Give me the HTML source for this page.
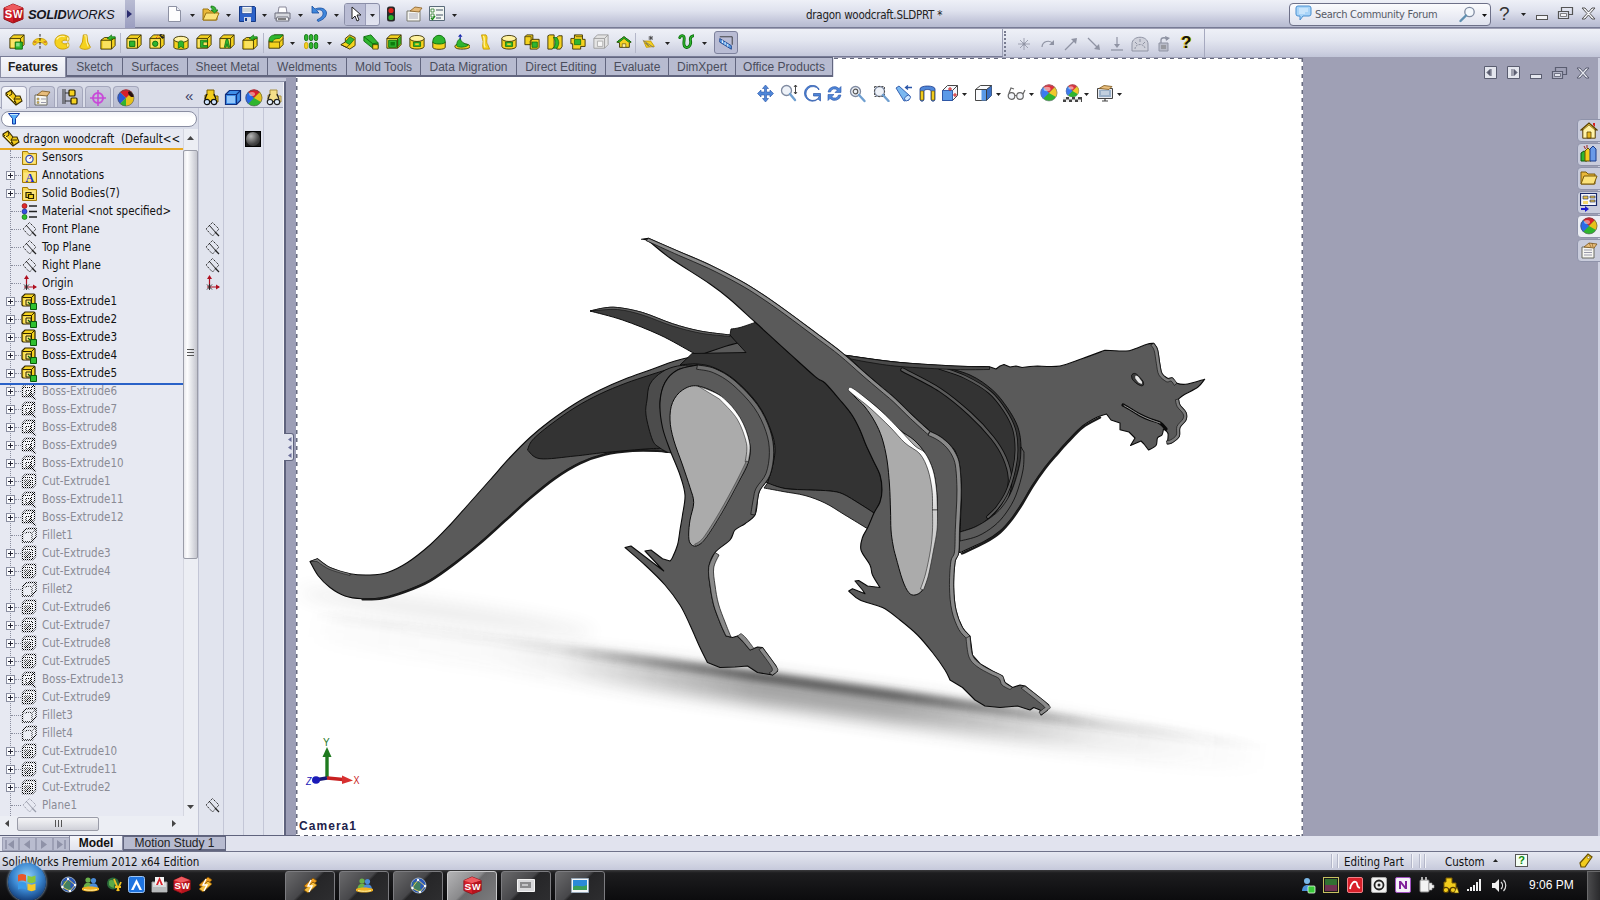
<!DOCTYPE html>
<html><head><meta charset="utf-8"><title>dragon woodcraft.SLDPRT</title>
<style>
*{box-sizing:border-box;margin:0;padding:0}
html,body{width:1600px;height:900px;overflow:hidden;background:#9fa0b5}
body{font-family:"DejaVu Sans Condensed","Liberation Sans",sans-serif;font-size:11px;color:#111}
#app{position:relative;width:1600px;height:900px;overflow:hidden;background:#9fa0b5}
.abs{position:absolute}
#titlebar{position:absolute;left:0;top:0;width:1600px;height:28px;background:linear-gradient(#eef0f7 0%,#dfe2ee 40%,#c6c9dc 75%,#b6bad0 100%);border-bottom:1px solid #777b95}
#logo{position:absolute;left:0;top:0;width:125px;height:28px;background:linear-gradient(#e8eaf3,#d6d9e7 50%,#c3c6d9)}
#logoarrow{position:absolute;left:125px;top:0;width:10px;height:28px;background:linear-gradient(#b9bcd3,#9b9ec0)}
#toolbar{position:absolute;left:0;top:29px;width:1600px;height:28px;background:linear-gradient(#eef0f7 0%,#e3e6f0 40%,#cfd2e2 80%,#c2c6d9 100%)}
#tabrow{position:absolute;left:0;top:57px;width:834px;height:20px;background:#dfe1ec}
.tab{position:absolute;top:57px;height:20px;border:1px solid #62667f;border-width:1px 1px 2px 1px;background:#b7bbd0;font-family:"Liberation Sans",sans-serif;font-size:12px;color:#4a4d5c;text-align:center;line-height:19px;white-space:nowrap}
.tab.act{background:linear-gradient(#f6f7fb,#e4e6f0);color:#222;font-weight:bold;border-color:#8a8da4;border-width:0 1px 1px 1px;height:21px;line-height:21px}
#viewport{position:absolute;left:296px;top:58px;width:1007px;height:778px;background:#fff;overflow:hidden}
.tt{font-family:"DejaVu Sans Condensed","Liberation Sans",sans-serif;font-size:11.5px;line-height:16px;white-space:nowrap;color:#111}
.pm{width:9px;height:9px;border:1px solid #8a8ea0;background:#fafbfd}
.pm:before{content:"";position:absolute;left:1px;top:3px;width:5px;height:1px;background:#223}
.pm:after{content:"";position:absolute;left:3px;top:1px;width:1px;height:5px;background:#223}

</style></head><body>
<div id="app">
<div id="viewport"><svg class="abs" style="left:-296px;top:-58px" width="1600" height="900" viewBox="0 0 1600 900"><defs><filter id="bl" x="-10%" y="-300%" width="120%" height="700%"><feGaussianBlur stdDeviation="3"/></filter><filter id="bl2" x="-10%" y="-300%" width="120%" height="700%"><feGaussianBlur stdDeviation="8.500"/></filter><linearGradient id="sg" x1="0" x2="1" y1="0" y2="0"><stop offset="0" stop-color="#404040" stop-opacity="0"/><stop offset=".04" stop-color="#404040" stop-opacity=".03"/><stop offset=".2" stop-color="#404040" stop-opacity=".06"/><stop offset=".265" stop-color="#404040" stop-opacity=".13"/><stop offset=".37" stop-color="#404040" stop-opacity=".52"/><stop offset=".47" stop-color="#404040" stop-opacity=".82"/><stop offset=".61" stop-color="#404040" stop-opacity=".78"/><stop offset=".71" stop-color="#404040" stop-opacity=".5"/><stop offset=".82" stop-color="#404040" stop-opacity=".16"/><stop offset=".92" stop-color="#404040" stop-opacity=".05"/><stop offset="1" stop-color="#404040" stop-opacity="0"/></linearGradient></defs>
<g transform="rotate(7.900 787 679)"><rect x="300" y="678.500" width="980" height="30" fill="url(#sg)" filter="url(#bl2)" opacity=".6"/><rect x="300" y="675" width="980" height="11" fill="url(#sg)" filter="url(#bl)" opacity=".9"/><ellipse cx="440" cy="660" rx="150" ry="9" fill="#404040" opacity=".1" filter="url(#bl2)"/></g>
<path d="M590.0 311.0C592.3 310.5 599.4 308.6 604.0 308.0C608.6 307.4 611.1 306.8 617.5 307.5C623.9 308.2 633.3 309.8 642.5 312.5C651.7 315.2 662.9 320.6 672.5 323.7C682.1 326.8 690.4 329.1 700.0 331.0C709.6 332.9 725.0 334.3 730.0 335.0L730.0 335.0L746.0 352.5L746.0 352.5L720.0 360.0L700.0 356.0C698.8 355.4 699.2 356.0 692.5 352.5C685.8 349.0 671.7 340.4 660.0 335.0C648.3 329.6 634.2 324.0 622.5 320.0C610.8 316.0 595.4 312.5 590.0 311.0Z" fill="#3c3c3c" stroke="#0a0a0a" stroke-width="1" stroke-linejoin="round" />
<path d="M590.0 311.0C592.3 310.5 599.4 308.6 604.0 308.0C608.6 307.4 611.1 306.8 617.5 307.5C623.9 308.2 633.3 309.8 642.5 312.5C651.7 315.2 662.9 320.6 672.5 323.7C682.1 326.8 690.4 329.1 700.0 331.0C709.6 332.9 725.0 334.3 730.0 335.0L730.0 336.5C725.0 335.9 709.6 334.8 700.0 333.0C690.4 331.2 682.1 329.0 672.5 326.0C662.9 323.0 651.7 317.8 642.5 315.0C633.3 312.2 626.2 310.2 617.5 309.5C608.8 308.8 594.6 310.8 590.0 311.0Z" fill="#666" stroke="#0a0a0a" stroke-width="0.6" stroke-linejoin="round" />
<path d="M310.0 561.5L317.5 558.7C319.6 560.2 324.6 565.0 330.0 567.5C335.4 570.0 343.3 572.5 350.0 573.7C356.7 575.0 363.8 575.2 370.0 575.0C376.2 574.8 381.2 574.6 387.5 572.5C393.8 570.4 400.4 567.1 407.5 562.5C414.6 557.9 422.9 551.2 430.0 545.0C437.1 538.8 443.3 532.1 450.0 525.0C456.7 517.9 463.3 510.0 470.0 502.5C476.7 495.0 483.3 487.5 490.0 480.0C496.7 472.5 503.3 464.6 510.0 457.5C516.7 450.4 523.3 443.6 530.0 437.5C536.7 431.4 542.5 426.6 550.0 421.0C557.5 415.4 566.7 408.9 575.0 403.7C583.3 398.5 591.7 394.1 600.0 390.0C608.3 385.9 616.7 382.3 625.0 379.0C633.3 375.7 641.7 373.0 650.0 370.0C658.3 367.0 666.7 363.5 675.0 361.0C683.3 358.5 695.8 356.0 700.0 355.0L700.0 355.0C710.0 352.5 735.5 339.9 760.0 340.0C784.5 340.1 824.5 351.8 847.0 355.5C869.5 359.2 877.0 360.2 895.0 362.0C913.0 363.8 939.2 365.2 955.0 366.0C970.8 366.8 983.8 366.6 989.5 366.7L996.0 369.0L1000.0 366.0L1004.0 364.5L1010.0 367.0L1016.0 366.0L1022.0 367.5L1030.0 366.5L1037.5 366.0C1041.2 366.0 1052.5 367.2 1060.0 366.0C1067.5 364.8 1075.0 361.1 1082.5 358.5C1090.0 355.9 1101.2 351.6 1105.0 350.2L1105.0 350.2C1108.5 350.3 1121.0 351.2 1126.0 351.0C1131.0 350.8 1131.5 349.8 1135.0 348.7C1138.5 347.6 1143.9 345.1 1147.0 344.2C1150.1 343.3 1152.6 343.4 1153.7 343.2L1153.7 343.2C1154.3 344.2 1156.5 346.2 1157.5 349.5C1158.5 352.8 1159.0 359.0 1159.7 363.0C1160.5 367.0 1160.6 370.9 1162.0 373.5C1163.4 376.1 1167.0 377.8 1168.0 378.7L1168.0 378.7C1168.8 378.6 1171.0 377.2 1172.5 378.0C1174.0 378.8 1174.5 382.2 1177.0 383.2C1179.5 384.2 1182.9 384.7 1187.5 384.0C1192.1 383.3 1201.8 380.0 1204.7 379.2L1204.7 379.2C1203.6 380.5 1201.4 384.4 1198.0 387.0C1194.6 389.6 1187.8 392.5 1184.5 394.5C1181.2 396.5 1179.5 398.2 1178.5 399.0L1178.5 399.0C1178.8 400.0 1178.8 402.8 1180.0 405.0C1181.2 407.2 1185.0 410.0 1186.0 412.5C1187.0 415.0 1187.0 417.5 1186.0 420.0C1185.0 422.5 1181.1 424.8 1180.0 427.5C1178.9 430.2 1180.5 434.0 1179.2 436.5C1178.0 439.0 1174.5 441.2 1172.5 442.5C1170.5 443.8 1168.1 443.8 1167.2 444.0L1167.2 444.0C1167.3 442.2 1168.6 436.0 1168.0 433.5C1167.4 431.0 1164.2 429.8 1163.5 429.0L1163.5 429.0C1163.2 430.0 1163.0 433.5 1162.0 435.0C1161.0 436.5 1158.5 436.2 1157.5 438.0C1156.5 439.8 1157.5 443.5 1156.0 445.5C1154.5 447.5 1149.8 449.2 1148.5 450.0L1144.0 444.0L1141.0 441.0L1130.5 445.5L1135.0 438.0L1129.0 432.0L1120.0 429.7L1120.0 423.0L1111.0 420.0L1106.5 414.0L1106.5 414.0C1105.0 414.5 1101.5 415.0 1097.5 417.0C1093.5 419.0 1087.5 422.0 1082.5 426.0C1077.5 430.0 1072.1 436.2 1067.5 441.0C1062.9 445.8 1058.8 450.7 1055.0 455.0C1051.2 459.3 1048.8 462.0 1045.0 467.0C1041.2 472.0 1036.2 479.2 1032.5 485.0C1028.8 490.8 1025.8 496.7 1022.5 502.0C1019.2 507.3 1016.2 512.2 1012.5 517.0C1008.8 521.8 1004.6 527.0 1000.0 531.0C995.4 535.0 991.7 537.4 985.0 541.0C978.3 544.6 964.2 550.6 960.0 552.5L960.0 552.5C955.0 550.4 940.0 544.6 930.0 540.0C920.0 535.4 909.6 529.5 900.0 525.0C890.4 520.5 880.8 516.7 872.5 513.0C864.2 509.3 857.9 505.8 850.0 503.0C842.1 500.2 833.3 498.0 825.0 496.0C816.7 494.0 806.7 492.2 800.0 491.0C793.3 489.8 790.4 490.1 785.0 488.7C779.6 487.3 770.4 483.5 767.5 482.5L767.5 482.5C759.6 480.4 732.9 473.8 720.0 470.0C707.1 466.2 698.8 463.2 690.0 460.0C681.2 456.8 671.2 452.5 667.5 451.0L667.5 451.0C665.8 450.8 663.3 450.2 657.5 450.0C651.7 449.8 641.2 449.4 632.5 450.0C623.8 450.6 613.8 451.6 605.0 453.7C596.2 455.8 588.3 458.5 580.0 462.5C571.7 466.5 563.3 471.7 555.0 477.5C546.7 483.3 538.3 490.4 530.0 497.5C521.7 504.6 513.3 512.5 505.0 520.0C496.7 527.5 488.3 535.4 480.0 542.5C471.7 549.6 463.3 556.2 455.0 562.5C446.7 568.8 438.3 575.2 430.0 580.0C421.7 584.8 412.9 588.1 405.0 591.0C397.1 593.9 389.6 596.2 382.5 597.5C375.4 598.8 368.8 599.0 362.5 598.7C356.2 598.5 350.4 597.9 345.0 596.0C339.6 594.1 334.5 590.9 330.0 587.5C325.5 584.1 321.3 579.8 318.0 575.5C314.7 571.2 311.3 563.8 310.0 561.5Z" fill="#5a5a5a" stroke="#0a0a0a" stroke-width="1.1" stroke-linejoin="round" />
<path d="M667.5 452.0C665.8 451.8 663.3 451.2 657.5 451.0C651.7 450.8 641.2 450.4 632.5 451.0C623.8 451.6 613.8 452.6 605.0 454.7C596.2 456.8 588.3 459.5 580.0 463.5C571.7 467.5 563.3 472.7 555.0 478.5C546.7 484.3 538.3 491.4 530.0 498.5C521.7 505.6 513.3 513.5 505.0 521.0C496.7 528.5 488.3 536.4 480.0 543.5C471.7 550.6 463.3 557.2 455.0 563.5C446.7 569.8 438.3 576.2 430.0 581.0C421.7 585.8 412.9 589.1 405.0 592.0C397.1 594.9 389.6 597.2 382.5 598.5C375.4 599.8 365.8 599.3 362.5 599.5" fill="none" stroke="#1a1a1a" stroke-width="2.2" stroke-linecap="round" stroke-linejoin="round" />
<path d="M1100.0 417.5C1097.1 419.2 1087.9 423.3 1082.5 427.5C1077.1 431.7 1072.1 437.7 1067.5 442.5C1062.9 447.3 1058.8 452.2 1055.0 456.5C1051.2 460.8 1048.8 463.5 1045.0 468.5C1041.2 473.5 1036.2 480.7 1032.5 486.5C1028.8 492.3 1025.8 498.2 1022.5 503.5C1019.2 508.8 1016.2 513.7 1012.5 518.5C1008.8 523.3 1004.6 528.5 1000.0 532.5C995.4 536.5 991.3 539.0 985.0 542.5C978.7 546.0 965.8 551.7 962.0 553.5" fill="none" stroke="#1a1a1a" stroke-width="2.4" stroke-linecap="round" stroke-linejoin="round" />
<path d="M527.5 450.0C528.3 448.3 528.8 444.2 532.5 440.0C536.2 435.8 542.9 430.4 550.0 425.0C557.1 419.6 566.7 412.7 575.0 407.5C583.3 402.3 591.7 398.0 600.0 394.0C608.3 390.0 616.7 386.7 625.0 383.5C633.3 380.3 642.2 377.6 650.0 375.0C657.8 372.4 668.3 369.2 672.0 368.0L672.0 368.0C670.0 373.3 661.7 389.7 660.0 400.0C658.3 410.3 660.7 421.9 662.0 430.0C663.3 438.1 667.0 445.6 668.0 448.7L668.0 448.7C665.0 448.7 660.5 448.1 650.0 448.7C639.5 449.3 617.5 451.3 605.0 452.5C592.5 453.7 585.8 455.0 575.0 456.0C564.2 457.0 547.9 459.7 540.0 458.7C532.1 457.7 529.6 451.4 527.5 450.0Z" fill="#333" stroke="#0a0a0a" stroke-width="0.9" stroke-linejoin="round" />
<path d="M692.0 353.5L746.0 352.5L746.0 352.5L730.0 335.0L730.0 335.0L731.0 329.0L731.0 329.0C732.5 328.8 736.0 328.6 740.0 327.5C744.0 326.4 752.5 323.3 755.0 322.5L755.0 322.0C760.3 326.8 776.5 341.8 786.6 350.9C796.7 360.0 809.1 371.5 815.5 376.9C821.9 382.2 820.9 379.1 825.0 383.0C829.1 386.9 835.5 394.7 840.0 400.0C844.5 405.3 848.7 410.0 852.0 415.0C855.3 420.0 857.7 425.0 860.0 430.0C862.3 435.0 863.8 440.0 866.0 445.0C868.2 450.0 870.7 455.0 873.0 460.0C875.3 465.0 878.5 470.0 880.0 475.0C881.5 480.0 882.0 485.5 882.0 490.0C882.0 494.5 881.3 498.2 880.0 502.0C878.7 505.8 875.0 511.2 874.0 513.0L874.0 513.0C871.7 511.5 865.2 507.2 860.0 504.0C854.8 500.8 848.0 496.2 843.0 494.0C838.0 491.8 835.5 491.7 830.0 491.0C824.5 490.3 817.5 490.4 810.0 490.0C802.5 489.6 792.1 489.6 785.0 488.5C777.9 487.4 770.4 484.3 767.5 483.5L767.5 483.5C768.8 478.2 774.6 461.2 775.0 452.0C775.4 442.8 773.0 436.2 770.0 428.0C767.0 419.8 762.8 411.0 757.0 403.0C751.2 395.0 742.0 385.8 735.0 380.0C728.0 374.2 721.2 370.7 715.0 368.0C708.8 365.3 703.3 364.5 697.5 364.0C691.7 363.5 682.9 364.8 680.0 365.0L680.0 365.0L692.0 353.5Z" fill="#333" stroke="#0a0a0a" stroke-width="0.9" stroke-linejoin="round" />
<path d="M767.5 483.0C770.4 483.9 777.9 487.3 785.0 488.5C792.1 489.7 802.5 489.6 810.0 490.0C817.5 490.4 824.5 490.3 830.0 491.0C835.5 491.7 838.0 491.8 843.0 494.0C848.0 496.2 854.8 500.8 860.0 504.0C865.2 507.2 871.7 511.5 874.0 513.0L874.0 513.0L868.0 529.0L868.0 529.0C864.2 526.7 852.2 519.3 845.0 515.0C837.8 510.7 831.7 506.2 825.0 503.0C818.3 499.8 812.0 497.4 805.0 495.5C798.0 493.6 789.8 492.8 783.0 491.5C776.2 490.2 767.2 488.6 764.0 488.0Z" fill="#5a5a5a" stroke="#0a0a0a" stroke-width="0.9" stroke-linejoin="round" />
<path d="M847.0 355.5C855.0 356.6 879.5 360.2 895.0 362.0C910.5 363.8 932.5 365.3 940.0 366.0L940.0 366.0C945.0 367.5 961.2 371.0 970.0 375.0C978.8 379.0 986.2 384.5 992.5 390.0C998.8 395.5 1003.2 401.8 1007.5 408.0C1011.8 414.2 1015.8 421.0 1018.0 427.5C1020.2 434.0 1020.8 440.8 1021.0 447.0C1021.2 453.2 1021.0 457.8 1019.5 465.0C1018.0 472.2 1014.9 483.0 1012.0 490.0C1009.1 497.0 1005.7 502.3 1002.0 507.0C998.3 511.7 994.5 514.7 990.0 518.0C985.5 521.3 980.0 524.7 975.0 527.0C970.0 529.3 962.5 531.2 960.0 532.0L960.0 532.0C960.2 527.0 961.0 510.7 961.0 502.0C961.0 493.3 960.7 487.7 960.0 480.0C959.3 472.3 958.7 461.8 957.0 456.0C955.3 450.2 954.5 449.1 950.0 445.0C945.5 440.9 933.3 433.8 930.0 431.5L930.0 431.5C927.2 428.9 918.7 421.4 913.0 416.0C907.3 410.6 900.7 403.7 895.6 399.0C890.5 394.3 887.4 392.0 882.2 387.6C877.0 383.2 870.3 377.8 864.4 372.4C858.5 367.0 849.9 358.3 847.0 355.5Z" fill="#333" stroke="#0a0a0a" stroke-width="0.9" stroke-linejoin="round" />
<path d="M902.5 369.7C908.8 373.1 928.8 382.6 940.0 390.0C951.2 397.4 961.2 406.0 970.0 414.0C978.8 422.0 986.8 430.8 992.5 438.0C998.2 445.2 1001.6 450.8 1004.5 457.5C1007.4 464.2 1009.6 471.4 1010.0 478.0C1010.4 484.6 1009.0 491.3 1007.0 497.0C1005.0 502.7 1001.5 507.7 998.0 512.0C994.5 516.3 988.0 521.2 986.0 523.0" fill="none" stroke="#0a0a0a" stroke-width="4.4" stroke-linecap="round" stroke-linejoin="round" />
<path d="M902.5 369.7C908.8 373.1 928.8 382.6 940.0 390.0C951.2 397.4 961.2 406.0 970.0 414.0C978.8 422.0 986.8 430.8 992.5 438.0C998.2 445.2 1001.6 450.8 1004.5 457.5C1007.4 464.2 1009.6 471.4 1010.0 478.0C1010.4 484.6 1009.0 491.3 1007.0 497.0C1005.0 502.7 1001.5 507.7 998.0 512.0C994.5 516.3 988.0 521.2 986.0 523.0" fill="none" stroke="#5a5a5a" stroke-width="2.6" stroke-linecap="round" stroke-linejoin="round" />
<path d="M940.0 368.0C944.2 369.5 956.8 373.0 965.0 377.0C973.2 381.0 982.9 386.5 989.5 392.0C996.1 397.5 1000.4 403.8 1004.5 410.0C1008.6 416.2 1012.0 422.3 1014.0 429.0C1016.0 435.7 1016.5 443.2 1016.5 450.0C1016.5 456.8 1015.6 463.0 1014.0 470.0C1012.4 477.0 1009.8 485.7 1007.0 492.0C1004.2 498.3 1000.2 503.8 997.0 508.0C993.8 512.2 989.5 515.5 988.0 517.0" fill="none" stroke="#0a0a0a" stroke-width="3.6" stroke-linecap="round" stroke-linejoin="round" />
<path d="M940.0 368.0C944.2 369.5 956.8 373.0 965.0 377.0C973.2 381.0 982.9 386.5 989.5 392.0C996.1 397.5 1000.4 403.8 1004.5 410.0C1008.6 416.2 1012.0 422.3 1014.0 429.0C1016.0 435.7 1016.5 443.2 1016.5 450.0C1016.5 456.8 1015.6 463.0 1014.0 470.0C1012.4 477.0 1009.8 485.7 1007.0 492.0C1004.2 498.3 1000.2 503.8 997.0 508.0C993.8 512.2 989.5 515.5 988.0 517.0" fill="none" stroke="#5a5a5a" stroke-width="2" stroke-linecap="round" stroke-linejoin="round" />
<path d="M847.0 355.5C855.0 356.6 877.0 360.2 895.0 362.0C913.0 363.8 939.2 365.2 955.0 366.0C970.8 366.8 983.8 366.6 989.5 366.7L989.5 369.5C983.8 369.5 969.9 370.0 955.0 369.5C940.1 369.0 914.2 367.7 900.0 366.5C885.8 365.3 878.2 363.8 870.0 362.5C861.8 361.2 854.2 359.6 851.0 359.0Z" fill="#4a4a4a" stroke="#0a0a0a" stroke-width="0.7" stroke-linejoin="round" />
<path d="M960.0 532.0C962.5 531.2 970.0 529.3 975.0 527.0C980.0 524.7 985.5 521.3 990.0 518.0C994.5 514.7 998.3 511.7 1002.0 507.0C1005.7 502.3 1009.1 497.0 1012.0 490.0C1014.9 483.0 1018.0 472.2 1019.5 465.0C1021.0 457.8 1020.8 450.0 1021.0 447.0L1024.0 452.0C1023.8 455.0 1024.3 462.8 1023.0 470.0C1021.7 477.2 1018.8 487.8 1016.0 495.0C1013.2 502.2 1009.7 507.8 1006.0 513.0C1002.3 518.2 998.7 522.2 994.0 526.0C989.3 529.8 983.7 533.5 978.0 536.0C972.3 538.5 963.0 540.2 960.0 541.0Z" fill="#5a5a5a" stroke="#0a0a0a" stroke-width="0.8" stroke-linejoin="round" />
<path d="M697.5 365.0C694.2 365.2 683.4 364.8 677.5 366.0C671.6 367.2 666.6 369.0 662.0 372.0C657.4 375.0 652.5 379.3 650.0 384.0C647.5 388.7 647.7 394.8 647.0 400.0C646.3 405.2 645.1 408.3 646.0 415.0C646.9 421.7 650.2 434.5 652.5 440.0C654.8 445.5 657.4 445.9 660.0 448.0C662.6 450.1 666.7 451.8 668.0 452.5L668.0 452.5C669.3 452.4 675.5 454.1 676.0 452.0C676.5 449.9 673.2 445.3 671.0 440.0C668.8 434.7 664.8 426.2 663.0 420.0C661.2 413.8 659.7 408.8 660.0 402.5C660.3 396.2 662.1 387.9 665.0 382.5C667.9 377.1 672.1 372.9 677.5 370.0C682.9 367.1 694.2 365.8 697.5 365.0Z" fill="#4c4c4c" stroke="#0a0a0a" stroke-width="0.9" stroke-linejoin="round" />
<path d="M697.5 365.0C700.4 365.6 708.8 366.0 715.0 368.7C721.2 371.4 727.9 374.9 735.0 381.0C742.1 387.1 751.7 396.8 757.5 405.0C763.3 413.2 767.3 422.1 770.0 430.0C772.7 437.9 773.7 445.0 773.7 452.5C773.7 460.0 772.3 468.8 770.0 475.0C767.7 481.2 762.1 485.8 760.0 490.0C757.9 494.2 757.9 498.3 757.5 500.0L757.5 500.0C757.1 502.5 757.1 511.1 755.0 515.0C752.9 519.0 748.3 521.2 745.0 523.7C741.7 526.2 737.5 527.3 735.0 530.0C732.5 532.7 733.3 536.2 730.0 540.0C726.7 543.8 718.5 547.9 715.0 552.5C711.5 557.1 709.5 562.1 708.7 567.5C707.9 572.9 709.2 578.8 710.0 585.0C710.8 591.2 712.0 598.8 713.7 605.0C715.4 611.2 718.0 617.3 720.0 622.5C722.0 627.7 725.0 633.8 726.0 636.0L732.5 637.5L737.5 636.0L742.5 641.0L750.0 650.0L757.5 647.0L762.5 647.5L776.0 666.0L777.5 671.0L772.5 675.0L757.5 672.5L747.5 666.0L735.0 667.0L720.0 667.5L707.5 662.5L707.5 662.5C706.2 660.0 702.9 653.8 700.0 647.5C697.1 641.2 693.3 632.1 690.0 625.0C686.7 617.9 684.2 611.7 680.0 605.0C675.8 598.3 670.8 591.7 665.0 585.0C659.2 578.3 651.7 571.2 645.0 565.0C638.3 558.8 628.3 550.4 625.0 547.5L631.0 546.0L663.7 571.0L645.0 551.0L651.0 550.0L662.5 558.7L670.0 561.0C670.4 560.4 671.2 560.2 672.5 557.5C673.8 554.8 676.2 549.6 677.5 545.0C678.8 540.4 679.2 535.0 680.0 530.0C680.8 525.0 681.7 520.8 682.5 515.0C683.3 509.2 685.4 501.7 685.0 495.0C684.6 488.3 682.5 482.5 680.0 475.0C677.5 467.5 672.9 457.9 670.0 450.0C667.1 442.1 664.2 435.4 662.5 427.5C660.8 419.6 659.6 410.0 660.0 402.5C660.4 395.0 662.1 387.9 665.0 382.5C667.9 377.1 672.1 372.9 677.5 370.0C682.9 367.1 694.2 365.8 697.5 365.0Z" fill="#5a5a5a" stroke="#0a0a0a" stroke-width="1.1" stroke-linejoin="round" />
<path d="M715.0 552.5C714.0 555.0 709.5 562.1 708.7 567.5C707.9 572.9 709.2 578.8 710.0 585.0C710.8 591.2 712.0 598.8 713.7 605.0C715.4 611.2 718.0 617.3 720.0 622.5C722.0 627.7 725.0 633.8 726.0 636.0L731.0 637.0C730.0 634.5 727.1 627.5 725.0 622.0C722.9 616.5 720.2 610.2 718.5 604.0C716.8 597.8 715.8 591.0 715.0 585.0C714.2 579.0 713.0 573.0 713.7 568.0C714.4 563.0 718.1 557.2 719.0 555.0Z" fill="#8a8a8a" stroke="#0a0a0a" stroke-width="0.7" stroke-linejoin="round" />
<path d="M737.5 636.0C738.3 636.8 740.4 638.7 742.5 641.0C744.6 643.3 748.8 648.5 750.0 650.0L750.0 650.0L754.0 648.5L754.0 648.5C752.7 646.8 748.2 640.5 746.0 638.0C743.8 635.5 741.8 634.2 741.0 633.5Z" fill="#8a8a8a" stroke="#0a0a0a" stroke-width="0.6" stroke-linejoin="round" />
<path d="M762.5 647.5C764.8 650.6 773.5 662.1 776.0 666.0C778.5 669.9 778.1 669.5 777.5 671.0C776.9 672.5 773.3 674.3 772.5 675.0L772.5 675.0L769.0 673.0L769.0 673.0C769.5 672.2 773.7 671.9 772.0 668.0C770.3 664.1 761.2 652.6 759.0 649.5Z" fill="#8a8a8a" stroke="#0a0a0a" stroke-width="0.6" stroke-linejoin="round" />
<path d="M697.5 365.0C700.4 365.6 708.8 366.0 715.0 368.7C721.2 371.4 727.9 374.9 735.0 381.0C742.1 387.1 751.7 396.8 757.5 405.0C763.3 413.2 767.3 422.1 770.0 430.0C772.7 437.9 773.7 445.0 773.7 452.5C773.7 460.0 772.3 468.8 770.0 475.0C767.7 481.2 762.1 485.8 760.0 490.0C757.9 494.2 758.3 495.8 757.5 500.0C756.7 504.2 755.4 512.5 755.0 515.0L750.8 514.3C751.2 511.8 752.4 503.5 753.3 499.2C754.2 494.8 754.0 492.3 756.2 488.1C758.3 483.8 763.8 479.5 766.0 473.5C768.2 467.6 769.4 459.5 769.4 452.5C769.4 445.5 768.5 438.9 765.9 431.4C763.4 423.9 759.6 415.4 754.0 407.5C748.4 399.6 739.0 390.1 732.2 384.3C725.4 378.5 719.2 375.2 713.3 372.7C707.4 370.1 699.4 369.8 696.6 369.2Z" fill="#6e6e6e" stroke="#0a0a0a" stroke-width="0.7" stroke-linejoin="round" />
<path d="M698 386C704.5 387.1 714.6 391.3 721.6 396.6C728.6 401.9 735.3 409.9 740.0 417.6C744.7 425.3 748.2 435.6 749.6 443.0C751.0 450.4 750.3 455.3 748.4 462.0C746.5 468.7 742.5 474.5 738.0 483.0C733.5 491.5 727.1 503.7 721.6 513.0C716.1 522.3 709.3 533.5 705.0 539.0C700.7 544.5 698.5 545.3 696.0 546.0C693.5 546.7 691.2 545.0 690.0 543.0C688.8 541.0 688.7 537.8 688.7 534.0C688.7 530.2 689.2 525.2 690.0 520.0C690.8 514.8 693.7 507.9 693.7 502.5C693.7 497.1 691.9 493.8 690.0 487.5C688.1 481.2 685.2 472.9 682.5 465.0C679.8 457.1 675.8 447.5 673.7 440.0C671.6 432.5 670.2 426.2 670.0 420.0C669.8 413.8 670.4 407.5 672.5 402.5C674.6 397.5 678.2 392.8 682.5 390.0C686.8 387.2 691.5 384.9 698.0 386.0Z" fill="#ababab" stroke="#0a0a0a" stroke-width="1"/>
<defs><linearGradient id="wg2" x1="0" y1="386" x2="0" y2="470" gradientUnits="userSpaceOnUse"><stop offset="0" stop-color="#fff"/><stop offset=".6" stop-color="#fff"/><stop offset="1" stop-color="#8a8a8a"/></linearGradient></defs>
<path d="M698.0 386.0C701.9 387.8 714.6 391.3 721.6 396.6C728.6 401.9 735.3 409.9 740.0 417.6C744.7 425.3 748.2 435.6 749.6 443.0C751.0 450.4 748.6 458.8 748.4 462.0L745.2 461.8C745.4 458.8 747.8 450.7 746.5 443.6C745.1 436.5 741.7 426.7 737.3 419.3C732.8 411.8 722.6 402.5 719.7 399.2Z" fill="url(#wg2)" stroke="#0a0a0a" stroke-width="0.5" stroke-linejoin="round" />
<path d="M748.4 462.0C746.7 465.5 742.5 474.5 738.0 483.0C733.5 491.5 727.1 503.7 721.6 513.0C716.1 522.3 709.3 533.5 705.0 539.0C700.7 544.5 697.5 544.8 696.0 546.0L694.6 544.3C696.1 543.2 699.1 543.0 703.3 537.7C707.4 532.3 714.2 521.2 719.7 511.9C725.2 502.6 731.6 490.5 736.1 482.0C740.5 473.5 744.7 464.5 746.4 461.0Z" fill="#808080" stroke="#0a0a0a" stroke-width="0.4" stroke-linejoin="round" />
<path d="M648.5 238.3C653.8 240.6 669.8 247.6 680.0 252.0C690.2 256.4 700.0 260.2 710.0 265.0C720.0 269.8 731.3 275.7 740.0 280.5C748.7 285.3 754.2 288.9 762.0 294.0C769.8 299.1 776.9 304.2 786.6 311.2C796.3 318.2 810.7 329.1 820.0 336.0C829.3 342.9 834.8 346.8 842.2 352.9C849.6 359.0 857.7 366.6 864.4 372.4C871.1 378.2 877.0 383.2 882.2 387.6C887.4 392.0 890.5 394.3 895.6 399.0C900.7 403.7 907.3 410.6 913.0 416.0C918.7 421.4 927.2 428.9 930.0 431.5L930.0 431.5C931.7 432.3 936.7 434.2 940.0 436.5C943.3 438.8 947.2 441.8 950.0 445.0C952.8 448.2 955.3 452.2 957.0 456.0C958.7 459.8 959.3 462.3 960.0 468.0C960.7 473.7 961.1 483.0 961.2 490.0C961.3 497.0 960.8 503.3 960.5 510.0C960.2 516.7 959.8 522.9 959.5 530.0C959.2 537.1 959.5 547.1 958.7 552.5C958.0 557.9 955.8 556.7 955.0 562.5C954.2 568.3 953.5 579.6 953.7 587.5C953.9 595.4 954.5 603.3 956.0 610.0C957.5 616.7 960.2 623.2 962.5 627.5C964.8 631.8 968.8 634.6 970.0 636.0L972.5 655.0L980.0 663.7L992.5 671.0L1002.5 676.0L1005.0 682.5L1012.5 687.5L1020.0 685.0L1025.0 686.0L1048.7 705.0L1047.5 710.0L1041.0 715.0L1040.0 710.0L1033.7 707.5L1030.0 710.0L1017.5 706.0L1000.0 707.5L985.0 706.0L975.0 700.0L962.5 687.5L950.0 680.0L950.0 680.0C949.2 678.3 947.9 674.6 945.0 670.0C942.1 665.4 937.1 658.3 932.5 652.5C927.9 646.7 922.9 640.4 917.5 635.0C912.1 629.6 905.8 624.6 900.0 620.0C894.2 615.4 889.2 610.8 882.5 607.5C875.8 604.2 865.6 602.8 860.0 600.0C854.4 597.2 850.6 592.5 848.7 591.0L852.5 588.7L865.0 593.7L862.5 590.0L855.0 581.0L858.7 580.5L867.5 586.0L880.0 587.5L880.0 587.5C878.8 585.4 874.2 578.8 872.5 575.0C870.8 571.2 871.9 569.2 870.0 565.0C868.1 560.8 862.2 554.6 861.0 550.0C859.8 545.4 861.3 541.3 862.5 537.5C863.7 533.7 866.1 531.1 868.0 527.0C869.9 522.9 872.0 517.2 874.0 513.0C876.0 508.8 878.7 505.8 880.0 502.0C881.3 498.2 882.0 494.5 882.0 490.0C882.0 485.5 881.5 480.0 880.0 475.0C878.5 470.0 875.3 465.0 873.0 460.0C870.7 455.0 868.2 450.0 866.0 445.0C863.8 440.0 862.3 435.0 860.0 430.0C857.7 425.0 855.3 420.0 852.0 415.0C848.7 410.0 844.5 405.3 840.0 400.0C835.5 394.7 829.1 386.9 825.0 383.0C820.9 379.1 821.9 382.2 815.5 376.9C809.1 371.5 796.7 360.0 786.6 350.9C776.5 341.8 764.6 330.7 755.0 322.0C745.4 313.3 736.5 304.8 729.0 298.5C721.5 292.2 719.8 290.8 710.0 284.0C700.2 277.2 680.2 265.1 670.0 258.0C659.8 250.9 653.8 244.6 649.0 241.5C644.2 238.4 642.8 239.6 641.5 239.2Z" fill="#5a5a5a" stroke="#0a0a0a" stroke-width="1.1" stroke-linejoin="round" />
<path d="M648.5 238.3C653.8 240.6 669.8 247.6 680.0 252.0C690.2 256.4 700.0 260.2 710.0 265.0C720.0 269.8 731.3 275.7 740.0 280.5C748.7 285.3 754.2 288.9 762.0 294.0C769.8 299.1 776.9 304.2 786.6 311.2C796.3 318.2 810.7 329.1 820.0 336.0C829.3 342.9 834.8 346.8 842.2 352.9C849.6 359.0 857.7 366.6 864.4 372.4C871.1 378.2 877.0 383.2 882.2 387.6C887.4 392.0 890.5 394.3 895.6 399.0C900.7 403.7 907.3 410.6 913.0 416.0C918.7 421.4 927.2 428.9 930.0 431.5L927.6 434.2C924.7 431.6 916.3 424.0 910.5 418.6C904.8 413.2 898.3 406.4 893.2 401.6C888.0 396.9 885.1 394.8 879.9 390.3C874.7 385.9 868.7 380.9 862.0 375.1C855.4 369.3 847.3 361.7 839.9 355.7C832.6 349.6 827.1 345.8 817.8 338.9C808.6 332.0 794.1 321.1 784.5 314.1C774.9 307.1 767.7 302.1 760.0 297.0C752.3 291.9 746.8 288.4 738.2 283.6C729.7 278.9 718.4 273.0 708.5 268.3C698.5 263.5 689.0 259.9 678.6 255.3C668.2 250.7 651.4 243.0 646.0 240.5Z" fill="#8a8a8a" stroke="#0a0a0a" stroke-width="0.7" stroke-linejoin="round" />
<path d="M930.0 431.5C931.7 432.3 936.7 434.2 940.0 436.5C943.3 438.8 947.2 441.8 950.0 445.0C952.8 448.2 955.3 452.2 957.0 456.0C958.7 459.8 959.3 462.3 960.0 468.0C960.7 473.7 961.1 483.0 961.2 490.0C961.3 497.0 960.8 503.3 960.5 510.0C960.2 516.7 959.8 522.9 959.5 530.0C959.2 537.1 959.5 547.1 958.7 552.5C958.0 557.9 955.8 556.7 955.0 562.5C954.2 568.3 953.5 579.6 953.7 587.5C953.9 595.4 954.5 603.3 956.0 610.0C957.5 616.7 960.2 623.2 962.5 627.5C964.8 631.8 968.8 634.6 970.0 636.0L966.9 638.8C965.5 637.2 961.3 634.1 958.8 629.5C956.3 624.8 953.4 617.9 951.9 610.9C950.3 603.9 949.7 595.8 949.5 587.6C949.3 579.4 950.0 567.9 950.8 561.9C951.7 556.0 953.8 557.3 954.5 551.9C955.3 546.6 955.0 536.8 955.3 529.8C955.6 522.8 956.0 516.5 956.3 509.8C956.6 503.2 957.1 496.9 957.0 490.0C956.9 483.2 956.5 473.9 955.8 468.5C955.2 463.1 954.6 461.1 953.1 457.7C951.6 454.2 949.4 450.7 946.8 447.8C944.3 444.8 940.8 442.1 937.7 440.0C934.5 437.9 929.7 436.0 928.1 435.3Z" fill="#8a8a8a" stroke="#0a0a0a" stroke-width="0.7" stroke-linejoin="round" />
<path d="M970.0 636.0C970.4 639.2 970.8 650.4 972.5 655.0C974.2 659.6 976.7 661.0 980.0 663.7C983.3 666.4 988.8 669.0 992.5 671.0C996.2 673.0 1000.4 674.1 1002.5 676.0C1004.6 677.9 1003.3 680.6 1005.0 682.5C1006.7 684.4 1011.2 686.7 1012.5 687.5L1010.0 689.5C1008.7 688.8 1003.8 686.8 1002.0 685.0C1000.2 683.2 1001.0 680.3 999.0 678.5C997.0 676.7 993.7 676.0 990.0 674.0C986.3 672.0 980.5 669.3 977.0 666.5C973.5 663.7 970.8 661.8 969.0 657.0C967.2 652.2 966.5 641.2 966.0 638.0Z" fill="#8a8a8a" stroke="#0a0a0a" stroke-width="0.6" stroke-linejoin="round" />
<path d="M1025.0 686.0C1029.0 689.2 1045.0 701.0 1048.7 705.0C1052.5 709.0 1048.8 708.3 1047.5 710.0C1046.2 711.7 1042.1 714.2 1041.0 715.0L1041.0 715.0L1039.0 712.0L1039.0 712.0C1039.8 711.4 1042.8 709.6 1043.5 708.5C1044.2 707.4 1046.8 708.9 1043.0 705.5C1039.2 702.1 1024.7 690.9 1021.0 688.0Z" fill="#8a8a8a" stroke="#0a0a0a" stroke-width="0.6" stroke-linejoin="round" />
<path d="M850 390.5C848.8 390.7 852.5 394.2 855.0 397.0C857.5 399.8 861.7 402.8 865.0 407.0C868.3 411.2 872.2 416.8 875.0 422.0C877.8 427.2 880.0 431.7 882.0 438.0C884.0 444.3 885.8 452.2 887.0 460.0C888.2 467.8 888.9 476.7 889.5 485.0C890.1 493.3 890.2 502.5 890.5 510.0C890.8 517.5 890.6 524.2 891.0 530.0C891.4 535.8 892.2 540.4 893.0 545.0C893.8 549.6 894.4 551.7 896.0 557.5C897.6 563.3 900.4 574.2 902.5 580.0C904.6 585.8 906.6 590.0 908.7 592.5C910.8 595.0 912.7 595.4 915.0 595.0C917.3 594.6 920.4 593.3 922.5 590.0C924.6 586.7 925.8 581.7 927.5 575.0C929.2 568.3 931.1 557.5 932.5 550.0C933.9 542.5 935.2 536.7 936.0 530.0C936.8 523.3 937.4 516.7 937.5 510.0C937.6 503.3 937.2 496.7 936.5 490.0C935.8 483.3 934.9 476.2 933.0 470.0C931.1 463.8 928.2 458.0 925.0 453.0C921.8 448.0 918.2 443.8 914.0 440.0C909.8 436.2 905.7 435.0 900.0 430.0C894.3 425.0 886.3 415.7 880.0 410.0C873.7 404.3 867.0 399.2 862.0 396.0C857.0 392.8 851.2 390.3 850.0 390.5Z" fill="#ababab" stroke="#0a0a0a" stroke-width="1"/>
<defs><linearGradient id="wg" x1="0" y1="440" x2="0" y2="515" gradientUnits="userSpaceOnUse"><stop offset="0" stop-color="#fff"/><stop offset=".5" stop-color="#fff"/><stop offset="1" stop-color="#cfcfcf"/></linearGradient></defs>
<path d="M848.0 390.0C848.8 389.8 847.7 385.2 853.0 388.5C858.3 391.8 872.2 403.1 880.0 410.0C887.8 416.9 894.2 424.0 900.0 430.0C905.8 436.0 910.8 442.2 915.0 446.0C919.2 449.8 922.0 449.0 925.0 453.0C928.0 457.0 931.1 463.8 933.0 470.0C934.9 476.2 935.8 483.3 936.5 490.0C937.2 496.7 937.3 506.7 937.5 510.0L932.5 510.0C932.4 506.7 932.8 496.7 932.0 490.0C931.2 483.3 930.0 476.0 928.0 470.0C926.0 464.0 923.8 458.5 920.0 454.0C916.2 449.5 910.0 447.5 905.0 443.0C900.0 438.5 895.8 432.8 890.0 427.0C884.2 421.2 875.8 413.2 870.0 408.0C864.2 402.8 858.7 399.0 855.0 396.0C851.3 393.0 849.2 391.0 848.0 390.0Z" fill="url(#wg)" stroke="#0a0a0a" stroke-width="0.6" stroke-linejoin="round" />
<path d="M937.5 510.0C937.4 513.3 937.7 523.3 937.0 530.0C936.3 536.7 934.9 542.5 933.5 550.0C932.1 557.5 930.2 568.3 928.5 575.0C926.8 581.7 924.3 587.5 923.5 590.0L920.5 589.0C921.3 586.5 923.8 580.5 925.5 574.0C927.2 567.5 929.3 557.3 930.5 550.0C931.7 542.7 932.2 536.7 932.5 530.0C932.8 523.3 932.5 513.3 932.5 510.0Z" fill="#cfcfcf" stroke="#0a0a0a" stroke-width="0.5" stroke-linejoin="round" />
<path d="M1131.5 375.5C1131.8 375.2 1132.2 373.9 1133.0 373.7C1133.8 373.5 1134.9 373.0 1136.5 374.2C1138.1 375.4 1141.6 379.2 1142.8 381.0C1144.0 382.8 1143.4 384.3 1143.5 385.0L1143.5 385.0C1143.2 385.1 1142.6 386.0 1141.5 385.8C1140.4 385.6 1138.5 384.8 1137.0 383.7C1135.5 382.6 1133.4 380.9 1132.5 379.5C1131.6 378.1 1131.7 376.2 1131.5 375.5Z" fill="#3a3a3a" stroke="#0a0a0a" stroke-width="0.9" stroke-linejoin="round" />
<path d="M1135.3 375.8C1135.8 375.9 1136.9 375.5 1138.0 376.5C1139.1 377.5 1141.3 380.8 1142.0 381.7L1142.0 383.8C1141.4 383.6 1139.6 383.4 1138.5 382.5C1137.4 381.6 1135.8 379.0 1135.2 378.3Z" fill="#e8e8e8" stroke="none" stroke-width="0" stroke-linejoin="round" />
<path d="M1123.0 405.0C1124.2 405.7 1127.2 407.3 1130.0 409.0C1132.8 410.7 1136.7 413.2 1140.0 415.0C1143.3 416.8 1146.7 418.2 1150.0 419.5C1153.3 420.8 1157.3 421.4 1160.0 423.0C1162.7 424.6 1165.0 428.0 1166.0 429.0" fill="none" stroke="#0a0a0a" stroke-width="3.2" stroke-linecap="round" stroke-linejoin="round" />
<path d="M1124.0 405.5C1125.0 406.1 1127.3 407.4 1130.0 409.0C1132.7 410.6 1136.7 413.2 1140.0 415.0C1143.3 416.8 1146.7 418.2 1150.0 419.5C1153.3 420.8 1158.3 422.4 1160.0 423.0" fill="none" stroke="#9a9a9a" stroke-width="1" stroke-linecap="round" stroke-linejoin="round" />
<path d="M1153.7 343.2C1154.3 344.2 1156.5 346.2 1157.5 349.5C1158.5 352.8 1159.0 359.0 1159.7 363.0C1160.5 367.0 1160.6 370.9 1162.0 373.5C1163.4 376.1 1166.2 377.9 1168.0 378.7C1169.8 379.4 1171.0 377.2 1172.5 378.0C1174.0 378.8 1176.2 382.3 1177.0 383.2L1174.4 385.4C1173.9 384.7 1172.3 381.6 1171.0 381.0C1169.7 380.4 1168.7 382.8 1166.7 381.8C1164.7 380.8 1160.7 378.1 1159.0 375.1C1157.3 372.1 1157.1 367.7 1156.4 363.6C1155.6 359.5 1155.2 353.6 1154.2 350.5C1153.3 347.4 1151.4 345.9 1150.8 345.0Z" fill="#7c7c7c" stroke="#0a0a0a" stroke-width="0.6" stroke-linejoin="round" />
<path d="M1178.5 399.0C1178.8 400.0 1178.8 402.8 1180.0 405.0C1181.2 407.2 1185.0 410.0 1186.0 412.5C1187.0 415.0 1187.0 417.5 1186.0 420.0C1185.0 422.5 1181.1 424.8 1180.0 427.5C1178.9 430.2 1180.5 434.0 1179.2 436.5C1178.0 439.0 1174.5 441.2 1172.5 442.5C1170.5 443.8 1168.1 443.8 1167.2 444.0L1166.3 440.9C1167.1 440.7 1169.1 440.8 1170.8 439.8C1172.5 438.8 1175.3 437.3 1176.3 435.1C1177.4 432.8 1175.9 429.0 1177.0 426.3C1178.2 423.6 1182.0 420.9 1183.0 418.8C1184.0 416.7 1184.0 415.7 1183.0 413.7C1182.1 411.6 1178.5 408.9 1177.2 406.6C1175.9 404.2 1175.7 400.9 1175.4 399.8Z" fill="#7c7c7c" stroke="#0a0a0a" stroke-width="0.6" stroke-linejoin="round" />
<path d="M310.0 561.5L317.5 558.7C319.6 560.2 324.6 565.0 330.0 567.5C335.4 570.0 346.7 572.7 350.0 573.7L350.0 575.5C346.7 574.5 335.5 571.8 330.0 569.5C324.5 567.2 319.2 562.8 317.0 561.5Z" fill="#7c7c7c" stroke="#0a0a0a" stroke-width="0.5" stroke-linejoin="round" /></svg><svg class="abs" style="left:461px;top:27px" width="17" height="17" viewBox="0 0 17 17" ><path d="M8.500 0l3 3.500h-2v3.500h3.500v-2l3.500 3.500-3.500 3.500v-2H9.500v3.500h2l-3 3.500-3-3.500h2V10H4v2L.5 8.500 4 5v2h3.500V3.500h-2z" fill="#4f86d8" stroke="#2a55a8" stroke-width=".6"/></svg>
<svg class="abs" style="left:484px;top:26px" width="18" height="18" viewBox="0 0 18 18" ><circle cx="6.500" cy="6.500" r="5" fill="#eef2f8" stroke="#7f8aa0" stroke-width="1.300"/><path d="M10 10l5 6" stroke="#6f9fd0" stroke-width="2.400" stroke-linecap="round"/><path d="M15.500 1v9M14 3l1.500-2L17 3M14 8l1.500 2L17 8" stroke="#333" stroke-width=".9" fill="none"/></svg>
<svg class="abs" style="left:508px;top:27px" width="17" height="17" viewBox="0 0 17 17" ><path d="M15 5A7 7 0 1 0 15.500 11H9.500V8.500h7V16l-2.500-2A8 8 0 1 1 14.500 3z" fill="#4f86d8" stroke="#2a55a8" stroke-width=".7"/></svg>
<svg class="abs" style="left:530px;top:27px" width="17" height="17" viewBox="0 0 17 17" ><path d="M2 7a6.500 6.500 0 0 1 11-3.500L15 1.500v6H9l2.300-2.300A4 4 0 0 0 4.500 7zM15 10a6.500 6.500 0 0 1-11 3.500L2 15.500v-6h6l-2.300 2.300A4 4 0 0 0 12.500 10z" fill="#4f86d8" stroke="#2a55a8" stroke-width=".6"/></svg>
<svg class="abs" style="left:553px;top:27px" width="18" height="18" viewBox="0 0 18 18" ><circle cx="6.500" cy="6.500" r="5" fill="#eef2f8" stroke="#7f8aa0" stroke-width="1.300"/><circle cx="6.500" cy="6.500" r="2.300" fill="none" stroke="#555" stroke-width="1.200"/><path d="M10 10l5.500 6" stroke="#6f9fd0" stroke-width="2.400" stroke-linecap="round"/></svg>
<svg class="abs" style="left:576px;top:26px" width="18" height="18" viewBox="0 0 18 18" ><circle cx="7.500" cy="7.500" r="5" fill="#eef2f8" stroke="#7f8aa0" stroke-width="1.300"/><path d="M2.500 2.500h10v10h-10z" fill="none" stroke="#555" stroke-dasharray="2 1.500" stroke-width="1"/><path d="M11 11l5.500 6" stroke="#6f9fd0" stroke-width="2.400" stroke-linecap="round"/></svg>
<svg class="abs" style="left:599px;top:27px" width="18" height="17" viewBox="0 0 18 17" ><path d="M1 3l3-2 11 10-1 4-5 1z" fill="#7ab8f0" stroke="#2a55a8" stroke-width=".9"/><ellipse cx="12.500" cy="13" rx="3.300" ry="2.300" transform="rotate(-40 12.500 13)" fill="#cfe8ff" stroke="#2a55a8" stroke-width=".8"/><path d="M17 2.500h-6M13 .5l-2.500 2 2.500 2" stroke="#2a55a8" stroke-width="1.300" fill="none"/></svg>
<svg class="abs" style="left:623px;top:27px" width="17" height="17" viewBox="0 0 17 17" ><path d="M1 4c0-4 15-4 15 0v10c0 3-4 3-4 0V6c0-2-7-2-7 0v8c0 3-4 3-4 0z" fill="#4f86d8" stroke="#1a3a8a" stroke-width=".8"/><path d="M1.500 6h3v9h-3zM12.500 6h3v9h-3z" fill="#f2cc1c" stroke="#6a5000" stroke-width=".6"/></svg>
<svg class="abs" style="left:645px;top:26px" width="18" height="18" viewBox="0 0 18 18" ><path d="M1.500 6.500l5-5h10v10l-5 5h-10z" fill="#f4f6fb" stroke="#333" stroke-width=".9"/><path d="M1.500 6.500h10v10h-10z" fill="#5a9ae8" stroke="#2a55a8" stroke-width=".9"/><path d="M11.500 6.500l5-5" stroke="#333" stroke-width=".9"/><path d="M9 3v4M7 5h4M14 9v4M12 11h4" stroke="#d02020" stroke-width="1"/></svg>

<svg class="abs" style="left:666px;top:35px" width="5" height="3" viewBox="0 0 5 3" ><path d="M0 0h5L2.500 3z" fill="#222"/></svg>
<svg class="abs" style="left:678px;top:26px" width="19" height="18" viewBox="0 0 19 18" ><path d="M1.500 5.500l5-4h11v10l-5 5h-11z" fill="#fafbfd" stroke="#333" stroke-width=".9"/><path d="M7.500 5.500h5v11h-5z" fill="#5a9ae8"/><path d="M12.500 5.500l5-4v10l-5 5z" fill="#3a72c8"/><path d="M1.500 5.500h11v11M12.500 5.500l5-4" fill="none" stroke="#333" stroke-width=".9"/></svg>
<svg class="abs" style="left:700px;top:35px" width="5" height="3" viewBox="0 0 5 3" ><path d="M0 0h5L2.500 3z" fill="#222"/></svg>
<svg class="abs" style="left:711px;top:28px" width="19" height="15" viewBox="0 0 19 15" ><circle cx="4.500" cy="10" r="3.300" fill="#f4f6fa" stroke="#666" stroke-width="1.200"/><circle cx="13" cy="10" r="3.300" fill="#f4f6fa" stroke="#666" stroke-width="1.200"/><path d="M7.800 9.500h2M2 7l2-5 3 1M16 8l2-4" fill="none" stroke="#666" stroke-width="1.200"/></svg>
<svg class="abs" style="left:733px;top:35px" width="5" height="3" viewBox="0 0 5 3" ><path d="M0 0h5L2.500 3z" fill="#222"/></svg>
<svg class="abs" style="left:744px;top:26px" width="18" height="18" viewBox="0 0 18 18" ><circle cx="9" cy="9" r="8" fill="#2fb52f"/><path d="M9 9L3 3a8 8 0 0 1 12 0z" fill="#e0303a"/><path d="M9 9L3 3a8 8 0 0 0 0 12z" fill="#3a7af0"/><path d="M9 9l6-6a8 8 0 0 1 1 10z" fill="#f0c82a"/><circle cx="9" cy="9" r="8" fill="none" stroke="#778" stroke-width=".6"/><ellipse cx="7" cy="5" rx="3.500" ry="2.200" fill="#fff" opacity=".5"/></svg>
<svg class="abs" style="left:767px;top:26px" width="19" height="19" viewBox="0 0 19 19" ><g transform="translate(2.500 0) scale(.78)"><circle cx="9" cy="9" r="8" fill="#2fb52f"/><path d="M9 9L3 3a8 8 0 0 1 12 0z" fill="#e0303a"/><path d="M9 9L3 3a8 8 0 0 0 0 12z" fill="#3a7af0"/><path d="M9 9l6-6a8 8 0 0 1 1 10z" fill="#f0c82a"/><circle cx="9" cy="9" r="8" fill="none" stroke="#778" stroke-width=".6"/><ellipse cx="7" cy="5" rx="3.500" ry="2.200" fill="#fff" opacity=".5"/></g><path d="M0 13h19v5H0z" fill="#444"/><path d="M0 13h3v2.500H0zM6 13h3v2.500H6zM12 13h3v2.500h-3zM3 15.500h3V18H3zM9 15.500h3V18H9zM15 15.500h3V18h-3z" fill="#eee"/></svg>
<svg class="abs" style="left:788px;top:35px" width="5" height="3" viewBox="0 0 5 3" ><path d="M0 0h5L2.500 3z" fill="#222"/></svg>
<svg class="abs" style="left:800px;top:27px" width="18" height="17" viewBox="0 0 18 17" ><path d="M1.500 3.500h15v10h-15z" fill="#e8eaf0" stroke="#444" stroke-width="1"/><path d="M3 5h12v7H3z" fill="#9ab0c8"/><path d="M6 16h6M9 13.500V16" stroke="#444" stroke-width="1.200"/><path d="M3 3.500l5-3 8 1-3 3z" fill="#e8bd7c" stroke="#7a5418" stroke-width=".8"/><path d="M5 7h8M5 9h8" stroke="#fff" stroke-width=".8"/></svg>
<svg class="abs" style="left:821px;top:35px" width="5" height="3" viewBox="0 0 5 3" ><path d="M0 0h5L2.500 3z" fill="#222"/></svg>
<svg class="abs" style="left:8px;top:678px" width="58" height="52" viewBox="0 0 58 52" ><path d="M23 41V20" stroke="#1f7a1f" stroke-width="3.400"/><path d="M23 11l-4.500 10h9z" fill="#1f7a1f"/><path d="M23 42l16 1.500" stroke="#c82020" stroke-width="3.400"/><path d="M49 44.500L38 39.500v8.500z" fill="#d83030"/><path d="M23 42l-9 1.500" stroke="#181878" stroke-width="3.600"/><ellipse cx="12" cy="44" rx="4" ry="3.800" fill="#1a1ab8"/><text x="19" y="10" font-family="Liberation Sans,sans-serif" font-size="10" fill="#1f7a1f">Y</text><text x="49.500" y="48" font-family="Liberation Sans,sans-serif" font-size="10" fill="#c82020" textLength="6" lengthAdjust="spacingAndGlyphs">X</text><text x="2" y="48.500" font-family="Liberation Sans,sans-serif" font-size="10" fill="#1a1ab8" font-style="italic" textLength="5.500" lengthAdjust="spacingAndGlyphs">Z</text></svg>
<div class="abs" style="left:3px;top:760px;font-family:'Liberation Sans',sans-serif;font-weight:bold;font-size:12px;line-height:16px;letter-spacing:1.050px;color:#22224a">Camera1</div>
<svg class="abs" style="left:0;top:0" width="1007" height="778"><path d="M.75 20V778" stroke="#666a7e" stroke-width="1.500" stroke-dasharray="4 4" fill="none"/><path d="M0 777.750H1007" stroke="#555868" stroke-width="1.500" stroke-dasharray="4 4" fill="none"/><path d="M1006.250 0V778" stroke="#666a7e" stroke-width="1.500" stroke-dasharray="4 4" fill="none"/><path d="M538 .5H1007" stroke="#666a7e" stroke-width="1.200" stroke-dasharray="4 4" fill="none"/></svg></div>
<div id="titlebar"></div><div id="logo"></div><div id="logoarrow"></div>
<svg class="abs" style="left:3px;top:3px" width="21" height="21" viewBox="0 0 21 21" ><path d="M1 5l9-4 10 4v11l-10 4-9-4z" fill="#d4202a" stroke="#8e1218" stroke-width="1"/><path d="M1 5l9 3 10-3-10-4z" fill="#ee5a5f"/><path d="M10 8v12l10-4V5z" fill="#b5141d"/><text x="1.800" y="15.200" font-family="Liberation Sans,sans-serif" font-weight="bold" font-size="11" fill="#fff" textLength="7.500" lengthAdjust="spacingAndGlyphs">S</text><text x="10" y="15.200" font-family="Liberation Sans,sans-serif" font-weight="bold" font-size="11" fill="#fff" textLength="9.500" lengthAdjust="spacingAndGlyphs">W</text></svg>
<div class="abs" style="left:28px;top:7px;font-family:'Liberation Sans',sans-serif;font-style:italic;font-size:13px;line-height:16px;color:#15151c;letter-spacing:-.3px;white-space:nowrap"><b style="font-weight:bold">SOLID</b><span style="letter-spacing:-.2px">WORKS</span></div>
<svg class="abs" style="left:127px;top:10px" width="5" height="8" viewBox="0 0 5 8" ><path d="M0 0l5 4-5 4z" fill="#2a2c6e"/></svg>
<svg class="abs" style="left:167px;top:6px" width="15" height="16" viewBox="0 0 15 16" ><path d="M1.500 .5h8l4 4v11h-12z" fill="#fdfdfe" stroke="#8d91a3"/><path d="M9.500 .5v4h4" fill="#e8eaf2" stroke="#8d91a3"/></svg>
<svg class="abs" style="left:190px;top:14px" width="5" height="3" viewBox="0 0 5 3"><path d="M0 0h5L2.5 3z" fill="#222"/></svg>
<svg class="abs" style="left:202px;top:5px" width="18" height="17" viewBox="0 0 18 17" ><path d="M1 15V4h5l2 2h7v9z" fill="#e9b83a" stroke="#9b7410"/><path d="M1 15l3-7h13l-3 7z" fill="#fbe27a" stroke="#9b7410"/><path d="M9 1c3 0 5 1 5 4h2l-3.500 3L9 5h2c0-1-1-2-2-2z" fill="#37b437" stroke="#0f6e0f" stroke-width=".7"/></svg>
<svg class="abs" style="left:226px;top:14px" width="5" height="3" viewBox="0 0 5 3"><path d="M0 0h5L2.5 3z" fill="#222"/></svg>
<svg class="abs" style="left:239px;top:6px" width="17" height="16" viewBox="0 0 17 16" ><path d="M.5.5h15l1 1v14H.5z" fill="#2c62c9" stroke="#163a86"/><path d="M3 .5h10v7H3z" fill="#f4f6fb" stroke="#163a86" stroke-width=".6"/><path d="M4 3h8M4 5h8" stroke="#9aa" stroke-width=".8"/><path d="M5 11h7v5H5z" fill="#cfd6e6"/><path d="M6 12h2v3H6z" fill="#163a86"/></svg>
<svg class="abs" style="left:262px;top:14px" width="5" height="3" viewBox="0 0 5 3"><path d="M0 0h5L2.5 3z" fill="#222"/></svg>
<svg class="abs" style="left:274px;top:6px" width="17" height="16" viewBox="0 0 17 16" ><path d="M5 1h7l1 6H4z" fill="#fff" stroke="#889"/><path d="M1 7h15v6H1z" fill="#d6d8de" stroke="#6c6f7c"/><path d="M3 11h11l1 4H2z" fill="#f2f2f4" stroke="#6c6f7c"/><path d="M4 13h8" stroke="#333" stroke-width="1.200"/></svg>
<svg class="abs" style="left:298px;top:14px" width="5" height="3" viewBox="0 0 5 3"><path d="M0 0h5L2.5 3z" fill="#222"/></svg>
<svg class="abs" style="left:310px;top:5px" width="18" height="17" viewBox="0 0 18 17" ><path d="M2 1v7h7L6.500 5.500C9 4 13 5 13 8.500S10 13 7 15l1 1.500C13 15 16.500 12 16.500 8S11 1.500 5 4z" fill="#3f87dc" stroke="#1b4fa0" stroke-width=".8"/></svg>
<svg class="abs" style="left:334px;top:14px" width="5" height="3" viewBox="0 0 5 3"><path d="M0 0h5L2.5 3z" fill="#222"/></svg>
<div class="abs" style="left:344px;top:3px;width:36px;height:23px;border:1px solid #8b8fa8;border-radius:3px;background:linear-gradient(#d5d8e8,#e2e4f0)"></div><div class="abs" style="left:345px;top:4px;width:21px;height:21px;background:#b9bcd4;border-right:1px solid #9a9db8;border-radius:2px 0 0 2px"></div>
<svg class="abs" style="left:351px;top:6px" width="11" height="16" viewBox="0 0 11 16" ><path d="M1 1v12l3-3 2 5 2-1-2-5h4z" fill="#fff" stroke="#222" stroke-width="1"/></svg>
<svg class="abs" style="left:370px;top:14px" width="5" height="3" viewBox="0 0 5 3"><path d="M0 0h5L2.5 3z" fill="#222"/></svg>
<svg class="abs" style="left:386px;top:6px" width="10" height="16" viewBox="0 0 10 16" ><rect x="1" y=".5" width="8" height="15" rx="2.500" fill="#2a2a2a"/><circle cx="5" cy="4.500" r="2.600" fill="#e2231a"/><circle cx="5" cy="11.500" r="2.600" fill="#26b226"/></svg>
<svg class="abs" style="left:405px;top:5px" width="18" height="17" viewBox="0 0 18 17" ><path d="M2 6h13v10H2z" fill="#f6f6f2" stroke="#7b7b70"/><path d="M4 9h9M4 11h9M4 13h9" stroke="#99a" stroke-width=".8"/><path d="M5 6l5-4 7 1-3 4z" fill="#e4b97a" stroke="#8a6022" stroke-width=".8"/></svg>
<svg class="abs" style="left:429px;top:6px" width="17" height="16" viewBox="0 0 17 16" ><path d="M.5.5h15v14H.5z" fill="#f2f6f2" stroke="#5a6a7a"/><path d="M2 3h3v3H2zM2 8h3v3H2z" fill="#fff" stroke="#2a7a2a" stroke-width=".8"/><path d="M7 4h7M7 9h7M7 12h5" stroke="#456" stroke-width="1"/><path d="M2 12l1.500 1.500L6 10" stroke="#1a8a1a" fill="none" stroke-width="1.300"/></svg>
<svg class="abs" style="left:452px;top:14px" width="5" height="3" viewBox="0 0 5 3"><path d="M0 0h5L2.5 3z" fill="#222"/></svg>
<div class="abs" style="left:806px;top:8px;font-size:11.500px;letter-spacing:-.25px;line-height:14px;color:#222;white-space:nowrap;font-family:'DejaVu Sans Condensed','Liberation Sans',sans-serif" id="ttl">dragon woodcraft.SLDPRT *</div>
<div class="abs" style="left:1289px;top:3px;width:202px;height:23px;border:1px solid #6d7088;border-radius:4px;background:linear-gradient(#fbfbfd,#dfe2ee)"></div>
<svg class="abs" style="left:1295px;top:5px" width="17" height="17" viewBox="0 0 17 17" ><path d="M3 1h11a2 2 0 0 1 2 2v6a2 2 0 0 1-2 2H8l-3 4v-4H3a2 2 0 0 1-2-2V3a2 2 0 0 1 2-2z" fill="#a8d4f8" stroke="#4a8fd0"/><path d="M4 4h9M4 6h9M4 8h6" stroke="#e8f4ff" stroke-width="1"/></svg>
<div class="abs" style="left:1315px;top:8px;font-size:11px;letter-spacing:-.3px;line-height:14px;color:#555a66;white-space:nowrap" id="srch">Search Community Forum</div>
<svg class="abs" style="left:1459px;top:6px" width="17" height="17" viewBox="0 0 17 17" ><circle cx="10.500" cy="6" r="4.700" fill="#f4f8fc" stroke="#7f8aa0" stroke-width="1.300"/><path d="M7 9.500L1.500 15" stroke="#5f8fb0" stroke-width="2.400" stroke-linecap="round"/></svg>
<svg class="abs" style="left:1482px;top:14px" width="5" height="3" viewBox="0 0 5 3"><path d="M0 0h5L2.5 3z" fill="#111"/></svg>
<div class="abs" style="left:1499px;top:3px;font-family:'Liberation Sans',sans-serif;font-size:19px;line-height:22px;color:#333">?</div>
<svg class="abs" style="left:1521px;top:13px" width="5" height="3" viewBox="0 0 5 3"><path d="M0 0h5L2.5 3z" fill="#222"/></svg>
<div class="abs" style="left:1536px;top:15px;width:12px;height:5px;border:1px solid #555;background:#f2f2f6"></div>
<svg class="abs" style="left:1557px;top:6px" width="17" height="14" viewBox="0 0 17 14" ><path d="M4.500 1.500h11v7h-11z" fill="none" stroke="#555" stroke-width="1.200"/><path d="M1.500 5.500h10v7h-10z" fill="#dfe2ee" stroke="#555" stroke-width="1.200"/><path d="M3.500 7.500h6v3h-6z" fill="#f4f4f8" stroke="#666" stroke-width=".8"/></svg>
<svg class="abs" style="left:1581px;top:7px" width="15" height="13" viewBox="0 0 15 13" ><path d="M1 1h3l3.500 4L11 1h3L9 6.500 14 12h-3L7.500 8 4 12H1l5-5.500z" fill="#f4f4f8" stroke="#555" stroke-width="1"/></svg>
<div id="toolbar"></div>
<div class="abs" style="left:0;top:29px;width:1003px;height:28px;border-right:1px solid #9a9db3;border-bottom:1px solid #777b95"></div>
<div class="abs" style="left:1004px;top:31px;width:0;height:25px;border-left:2px dotted #777b90"></div>
<div class="abs" style="left:1003px;top:29px;width:202px;height:28px;border-right:1px solid #a6a9bf"></div>
<div class="abs" style="left:120px;top:33px;width:1px;height:20px;background:#b4b7c9"></div>
<div class="abs" style="left:263px;top:33px;width:1px;height:20px;background:#b4b7c9"></div>
<div class="abs" style="left:635px;top:33px;width:1px;height:20px;background:#b4b7c9"></div>
<svg class="abs" style="left:9px;top:34px" width="16" height="16" viewBox="0 0 18 18" ><path d="M1 5l4-4h12v11l-4 4H1z" fill="#f5d21f" stroke="#3a3000" stroke-width="1"/><path d="M1 5h12v11M13 5l4-4" fill="none" stroke="#3a3000" stroke-width="1"/><path d="M2 6h10v9H2z" fill="#fff2a0" opacity=".55"/><path d="M7 9h8v8H7z" fill="#2fb52f" stroke="#0a6a0a" stroke-width="1"/><path d="M8 10h4v4H8z" fill="#8be08b"/></svg>
<svg class="abs" style="left:32px;top:34px" width="16" height="16" viewBox="0 0 18 18" ><path d="M1 11c0-5 5-6 8-6s8 1 8 6c0 2-3 2-4 0-1-2-7-2-8 0-1 2-4 2-4 0z" fill="#f5d21f" stroke="#c79a00"/><path d="M9 0v18" stroke="#111" stroke-dasharray="3 1.500" stroke-width="1"/><path d="M5 9l-3 0M13 9l3 0" stroke="#a33" stroke-width="1"/></svg>
<svg class="abs" style="left:54px;top:34px" width="16" height="16" viewBox="0 0 18 18" ><path d="M16 3C11-1 1 1 1 9s10 10 15 6l0-5c-3 2-7 1-7-1s4-3 7-1z" fill="#f5d21f" stroke="#c79a00"/><path d="M3 6c2-3 6-4 9-3" stroke="#fff2a0" fill="none" stroke-width="1.500"/><ellipse cx="15.500" cy="5.500" rx="1.500" ry="2.500" fill="#fff2a0" stroke="#c79a00" stroke-width=".7"/><ellipse cx="15.500" cy="12.500" rx="1.500" ry="2.500" fill="#fff2a0" stroke="#c79a00" stroke-width=".7"/></svg>
<svg class="abs" style="left:78px;top:34px" width="16" height="16" viewBox="0 0 18 18" ><path d="M6 1h4l1 8 3 6c-2 3-10 3-12 0l3-6z" fill="#f5d21f" stroke="#c79a00"/><path d="M7 2h2l.5 7 2 5" stroke="#fff2a0" fill="none" stroke-width="1.2"/></svg>
<svg class="abs" style="left:100px;top:34px" width="16" height="16" viewBox="0 0 18 18" ><path d="M1 7l4-3h12v9l-4 4H1z" fill="#f5d21f" stroke="#3a3000"/><path d="M1 7h12v10M13 7l4-3" fill="none" stroke="#3a3000"/><path d="M3 8h9v8H3z" fill="#fff2a0" opacity=".5"/><path d="M8 5l5-4v2h4v2h-4v2z" fill="#2fb52f" stroke="#0a6a0a" stroke-width=".7"/></svg>
<svg class="abs" style="left:126px;top:34px" width="16" height="16" viewBox="0 0 18 18" ><path d="M1 5l4-4h12v11l-4 4H1z" fill="#f5d21f" stroke="#3a3000" stroke-width="1"/><path d="M1 5h12v11M13 5l4-4" fill="none" stroke="#3a3000" stroke-width="1"/><path d="M2 6h10v9H2z" fill="#fff2a0" opacity=".55"/><path d="M4 8h6v6H4z" fill="#2fb52f" stroke="#0a6a0a" stroke-width="1"/></svg>
<svg class="abs" style="left:149px;top:34px" width="16" height="16" viewBox="0 0 18 18" ><path d="M1 5l4-4h12v11l-4 4H1z" fill="#f5d21f" stroke="#3a3000" stroke-width="1"/><path d="M1 5h12v11M13 5l4-4" fill="none" stroke="#3a3000" stroke-width="1"/><path d="M2 6h10v9H2z" fill="#fff2a0" opacity=".55"/><circle cx="7" cy="11" r="3" fill="#2fb52f" stroke="#0a6a0a" stroke-width="1"/><path d="M12 1l4 4M13 0l1 1M16 3l1 1" stroke="#222" stroke-width="1.6"/><path d="M9 2h1M11 4h1M8 4h1" stroke="#d22" stroke-width="1"/></svg>
<svg class="abs" style="left:173px;top:34px" width="16" height="16" viewBox="0 0 18 18" ><path d="M1 6v9c0 3 16 3 16 0V6z" fill="#f5d21f" stroke="#3a3000"/><ellipse cx="9" cy="6" rx="8" ry="3.4" fill="#fff2a0" stroke="#3a3000"/><path d="M6 16v-6c0-3 6-3 6 0v6l-3-2z" fill="#2fb52f" stroke="#0a6a0a" stroke-width=".8"/></svg>
<svg class="abs" style="left:196px;top:34px" width="16" height="16" viewBox="0 0 18 18" ><path d="M1 5l4-4h12v11l-4 4H1z" fill="#f5d21f" stroke="#3a3000" stroke-width="1"/><path d="M1 5h12v11M13 5l4-4" fill="none" stroke="#3a3000" stroke-width="1"/><path d="M2 6h10v9H2z" fill="#fff2a0" opacity=".55"/><path d="M5 7h8v2H8v4h5v2H5z" fill="#2fb52f" stroke="#0a6a0a" stroke-width=".8"/></svg>
<svg class="abs" style="left:219px;top:34px" width="16" height="16" viewBox="0 0 18 18" ><path d="M1 5l4-4h12v11l-4 4H1z" fill="#f5d21f" stroke="#3a3000" stroke-width="1"/><path d="M1 5h12v11M13 5l4-4" fill="none" stroke="#3a3000" stroke-width="1"/><path d="M2 6h10v9H2z" fill="#fff2a0" opacity=".55"/><path d="M6 15l2-9h2l2 9h-2l-1-4-1 4z" fill="#2fb52f" stroke="#0a6a0a" stroke-width=".8"/></svg>
<svg class="abs" style="left:242px;top:34px" width="16" height="16" viewBox="0 0 18 18" ><path d="M1 7l4-3h12v9l-4 4H1z" fill="#f5d21f" stroke="#3a3000"/><path d="M1 7h12v10M13 7l4-3" fill="none" stroke="#3a3000"/><path d="M3 8h9v8H3z" fill="#fff2a0" opacity=".5"/><path d="M8 5l5-4v2h4v2h-4v2z" fill="#2fb52f" stroke="#0a6a0a" stroke-width=".7"/></svg>
<svg class="abs" style="left:268px;top:34px" width="16" height="16" viewBox="0 0 18 18" ><path d="M1 8L7 1h10v11l-4 4H1z" fill="#f5d21f" stroke="#3a3000"/><path d="M1 8C1 3 4 1 8 1h9l-4 4C8 5 6 6 5 9z" fill="#2fb52f" stroke="#0a6a0a" stroke-width=".8"/><path d="M1 9h12v7M13 9l4-4" fill="none" stroke="#3a3000" stroke-width=".8"/></svg>
<svg class="abs" style="left:304px;top:34px" width="16" height="16" viewBox="0 0 18 18" ><rect x="0.6000000000000001" y="0.5" width="3.8" height="7" rx="1.9" fill="#2fb52f" stroke="#0a6a0a" stroke-width=".9"/><rect x="0.6000000000000001" y="9.5" width="3.8" height="7" rx="1.9" fill="#f5d21f" stroke="#c79a00" stroke-width=".9"/><rect x="6.1" y="0.5" width="3.8" height="7" rx="1.9" fill="#2fb52f" stroke="#0a6a0a" stroke-width=".9"/><rect x="6.1" y="9.5" width="3.8" height="7" rx="1.9" fill="#2fb52f" stroke="#0a6a0a" stroke-width=".9"/><rect x="11.6" y="0.5" width="3.8" height="7" rx="1.9" fill="#2fb52f" stroke="#0a6a0a" stroke-width=".9"/><rect x="11.6" y="9.5" width="3.8" height="7" rx="1.9" fill="#2fb52f" stroke="#0a6a0a" stroke-width=".9"/></svg>
<svg class="abs" style="left:340px;top:34px" width="16" height="16" viewBox="0 0 18 18" ><path d="M1 12l5-3V5l5-4 6 3v9l-6 4z" fill="#f5d21f" stroke="#3a3000"/><path d="M6 9l5 3 5-6-5-3z" fill="#2fb52f" stroke="#0a6a0a" stroke-width=".8"/><path d="M1 12l6 3 4-3" fill="none" stroke="#3a3000" stroke-width=".8"/></svg>
<svg class="abs" style="left:363px;top:34px" width="16" height="16" viewBox="0 0 18 18" ><path d="M1 3l8-2 8 9v6h-6L1 8z" fill="#2fb52f" stroke="#0a6a0a"/><path d="M1 3l10 8v5M11 11l6-1" fill="none" stroke="#0a6a0a"/><path d="M11 12h6v5h-6z" fill="#f5d21f" stroke="#3a3000" stroke-width=".8"/></svg>
<svg class="abs" style="left:386px;top:34px" width="16" height="16" viewBox="0 0 18 18" ><path d="M1 5l4-4h12v11l-4 4H1z" fill="#f5d21f" stroke="#3a3000" stroke-width="1"/><path d="M1 5h12v11M13 5l4-4" fill="none" stroke="#3a3000" stroke-width="1"/><path d="M2 6h10v9H2z" fill="#fff2a0" opacity=".55"/><path d="M3 7h9v8H3z" fill="#2fb52f" stroke="#0a6a0a" stroke-width="1"/><path d="M5 9h5v4H5z" fill="#0c7c0c"/><path d="M13.500 6l3-3v8l-3 3z" fill="#2fb52f" stroke="#0a6a0a" stroke-width=".6"/></svg>
<svg class="abs" style="left:409px;top:34px" width="16" height="16" viewBox="0 0 18 18" ><path d="M1 5v9c0 4 16 4 16 0V5z" fill="#f5d21f" stroke="#3a3000"/><ellipse cx="9" cy="5" rx="8" ry="3.4" fill="#fff2a0" stroke="#3a3000"/><path d="M5 9h8v5H5z" fill="#2fb52f" stroke="#0a6a0a" stroke-width=".8"/><path d="M7 10.500h4v2H7z" fill="#f5d21f"/></svg>
<svg class="abs" style="left:431px;top:34px" width="16" height="16" viewBox="0 0 18 18" ><path d="M2 9v6c0 3 14 3 14 0V9z" fill="#f5d21f" stroke="#3a3000"/><path d="M2 9c0-10 14-10 14 0c0 3-14 3-14 0z" fill="#2fb52f" stroke="#0a6a0a"/></svg>
<svg class="abs" style="left:454px;top:34px" width="16" height="16" viewBox="0 0 18 18" ><path d="M1 14c0-2 3-3 8-3s9 1 9 3-4 3-9 3-8-1-8-3z" fill="#f5d21f" stroke="#3a3000"/><path d="M3 13c0-6 3-7 4-8 1 4 4 6 9 7 0 3-13 4-13 1z" fill="#2fb52f" stroke="#0a6a0a" stroke-width=".8"/><path d="M7 0l-2.500 3h5z" fill="#12a"/><path d="M7 3v3" stroke="#12a" stroke-width="1.300"/></svg>
<svg class="abs" style="left:478px;top:34px" width="16" height="16" viewBox="0 0 18 18" ><path d="M4 1h5c3 4-1 7 2 11l2 5H6c-2-4 1-8-1-11z" fill="#f5d21f" stroke="#c79a00"/><path d="M6 2c3 4-1 8 2 13" stroke="#fff2a0" fill="none" stroke-width="1.500"/></svg>
<svg class="abs" style="left:501px;top:34px" width="16" height="16" viewBox="0 0 18 18" ><path d="M1 5v9c0 4 16 4 16 0V5z" fill="#f5d21f" stroke="#3a3000"/><ellipse cx="9" cy="5" rx="8" ry="3.4" fill="#fff2a0" stroke="#3a3000"/><path d="M5 9h8v5H5z" fill="#2fb52f" stroke="#0a6a0a" stroke-width=".8"/><path d="M7 10.500h4v2H7z" fill="#f5d21f"/></svg>
<svg class="abs" style="left:524px;top:34px" width="16" height="16" viewBox="0 0 18 18" ><path d="M1 3l2-2h7v9l-2 2H1z" fill="#f5d21f" stroke="#3a3000"/><path d="M7 8l2-2h8v9l-2 2H7z" fill="#f5d21f" stroke="#3a3000"/><path d="M9 9h6v6H9z" fill="#2fb52f" stroke="#0a6a0a" stroke-width=".8"/><path d="M1 3h7v9" fill="none" stroke="#3a3000" stroke-width=".8"/></svg>
<svg class="abs" style="left:547px;top:34px" width="16" height="16" viewBox="0 0 18 18" ><path d="M1 2l2-1h5v13l-2 3H1z" fill="#f5d21f" stroke="#3a3000"/><path d="M11 4l2-2h4v12l-2 3h-4z" fill="#f5d21f" stroke="#3a3000"/><path d="M7 4c3 2 3 9 0 12l4 0c3-4 3-8 0-12z" fill="#2fb52f" stroke="#0a6a0a" stroke-width=".8"/></svg>
<svg class="abs" style="left:570px;top:34px" width="16" height="16" viewBox="0 0 18 18" ><path d="M5 1h9v5h3v8h-5v3H3v-6H1V5h4z" fill="#f5d21f" stroke="#3a3000"/><path d="M5 6h7v6H5z" fill="#2fb52f" stroke="#0a6a0a" stroke-width=".8"/><path d="M5 1l2 2h7" fill="none" stroke="#3a3000" stroke-width=".7"/></svg>
<svg class="abs" style="left:593px;top:34px" width="16" height="16" viewBox="0 0 18 18" ><path d="M1 5l4-4h12v11l-4 4H1z" fill="#e4e4e4" stroke="#9a9a9a" stroke-width="1"/><path d="M1 5h12v11M13 5l4-4" fill="none" stroke="#9a9a9a"/><path d="M5 8h6v6H5z" fill="#f6f6f6" stroke="#aaa"/></svg>
<svg class="abs" style="left:616px;top:34px" width="16" height="16" viewBox="0 0 18 18" ><path d="M1 9l8-6 8 6-2 1v5H4v-5z" fill="#f5d21f" stroke="#3a3000"/><path d="M1 9l8-6 8 6-3 0-5-4-5 4z" fill="#2fb52f" stroke="#0a6a0a" stroke-width=".8"/><path d="M7 11h4v4H7z" fill="#fff2a0" stroke="#3a3000" stroke-width=".6"/></svg>
<svg class="abs" style="left:641px;top:34px" width="16" height="16" viewBox="0 0 18 18" ><path d="M3 8l8 0 4 6-9 1z" fill="#f5d21f" stroke="#c79a00"/><path d="M5 10l4 4M11 2l0 5M8.500 4.500h5M9 2.500l4 4M13 2.500l-4 4" stroke="#444" stroke-width="1"/><path d="M2 7l12 8" stroke="#777" stroke-width="1"/></svg>
<svg class="abs" style="left:678px;top:34px" width="16" height="16" viewBox="0 0 18 18" ><path d="M2 4c1-3 5-3 5 1s-2 9 2 10 6-4 5-8 3-5 3-5" fill="none" stroke="#0a6a0a" stroke-width="3.200" stroke-linecap="round"/><path d="M2 4c1-3 5-3 5 1s-2 9 2 10 6-4 5-8 3-5 3-5" fill="none" stroke="#2fb52f" stroke-width="1.400" stroke-linecap="round"/></svg>
<svg class="abs" style="left:290px;top:42px" width="5" height="3" viewBox="0 0 5 3"><path d="M0 0h5L2.5 3z" fill="#222"/></svg>
<svg class="abs" style="left:327px;top:42px" width="5" height="3" viewBox="0 0 5 3"><path d="M0 0h5L2.5 3z" fill="#222"/></svg>
<svg class="abs" style="left:665px;top:42px" width="5" height="3" viewBox="0 0 5 3"><path d="M0 0h5L2.5 3z" fill="#222"/></svg>
<svg class="abs" style="left:702px;top:42px" width="5" height="3" viewBox="0 0 5 3"><path d="M0 0h5L2.5 3z" fill="#222"/></svg>
<div class="abs" style="left:714px;top:31px;width:24px;height:23px;border:1px solid #7d819c;border-radius:3px;background:#b9bcd4"></div>
<svg class="abs" style="left:718px;top:35px" width="16" height="16" viewBox="0 0 18 18" ><path d="M2 4l13 8v4L2 8z" fill="#5aa0e8" stroke="#1b3f8a"/><path d="M5 6v3M8 8v3M11 10v3" stroke="#fff" stroke-width="1"/><path d="M2 2l14 0M16 2v9" stroke="#333" stroke-width="1"/></svg>
<svg class="abs" style="left:1016px;top:36px" width="16" height="16" viewBox="0 0 16 16" ><path d="M8 2v12M2 8h12M4 4l8 8M12 4l-8 8" stroke="#8f93a3" stroke-width=".8"/><circle cx="8" cy="8" r="1.500" fill="#8f93a3"/></svg>
<svg class="abs" style="left:1040px;top:36px" width="16" height="16" viewBox="0 0 16 16" ><path d="M2 11a6 6 0 0 1 11-3" fill="none" stroke="#8f93a3" stroke-width="1.200"/><path d="M14 4v5h-5z" fill="#8f93a3"/></svg>
<svg class="abs" style="left:1063px;top:36px" width="16" height="16" viewBox="0 0 16 16" ><path d="M2 14L12 4" stroke="#8f93a3" stroke-width="1.200"/><path d="M14 2l-1 6-5-5z" fill="#8f93a3"/></svg>
<svg class="abs" style="left:1086px;top:36px" width="16" height="16" viewBox="0 0 16 16" ><path d="M2 2l10 10" stroke="#8f93a3" stroke-width="1.200"/><path d="M14 14l-6-1 5-5z" fill="#8f93a3"/></svg>
<svg class="abs" style="left:1109px;top:36px" width="16" height="16" viewBox="0 0 16 16" ><path d="M8 1v8" stroke="#8f93a3" stroke-width="1.200"/><path d="M8 12l-3-4h6z" fill="#8f93a3"/><path d="M2 14h12" stroke="#8f93a3" stroke-width="1.300"/></svg>
<svg class="abs" style="left:1131px;top:35px" width="18" height="17" viewBox="0 0 18 17" ><path d="M1 16V9c0-9 16-9 16 0v7z" fill="#cfd1db" stroke="#8f93a3"/><path d="M4 14c0-6 10-6 10 0" fill="none" stroke="#8f93a3" stroke-dasharray="2 1"/><path d="M4 7l2 2M14 7l-2 2M9 4v3" stroke="#8f93a3"/></svg>
<svg class="abs" style="left:1156px;top:35px" width="16" height="17" viewBox="0 0 16 17" ><path d="M3 8h9v8H3z" fill="#b9bcc9" stroke="#8f93a3"/><path d="M5 8V5c0-3 6-3 6 0" fill="none" stroke="#8f93a3" stroke-width="1.300"/><path d="M9 1l5 2-4 3z" fill="#8f93a3"/><path d="M5 11h5M5 13h5" stroke="#777"/></svg>
<div class="abs" style="left:1181px;top:33px;font-family:'Liberation Sans',sans-serif;font-weight:bold;font-size:17px;line-height:20px;color:#111;text-shadow:1px 0 0 #e8d21a,-1px 0 0 #e8d21a">?</div>
<div id="tabrow"></div>
<div class="tab act" style="left:0px;width:66px">Features</div>
<div class="tab" style="left:66px;width:57px">Sketch</div>
<div class="tab" style="left:122px;width:66px">Surfaces</div>
<div class="tab" style="left:187px;width:81px">Sheet Metal</div>
<div class="tab" style="left:267px;width:80px">Weldments</div>
<div class="tab" style="left:346px;width:75px">Mold Tools</div>
<div class="tab" style="left:420px;width:97px">Data Migration</div>
<div class="tab" style="left:516px;width:90px">Direct Editing</div>
<div class="tab" style="left:605px;width:64px">Evaluate</div>
<div class="tab" style="left:668px;width:68px">DimXpert</div>
<div class="tab" style="left:735px;width:98px">Office Products</div>
<svg width="0" height="0" style="position:absolute"><defs><pattern id="dz" width="2" height="2" patternUnits="userSpaceOnUse"><rect width="2" height="2" fill="#000"/><rect width="1" height="1" fill="#fff"/><rect x="1" y="1" width="1" height="1" fill="#fff"/></pattern><mask id="dm" maskUnits="userSpaceOnUse" x="0" y="0" width="20" height="20"><rect width="20" height="20" fill="url(#dz)"/></mask></defs></svg>
<div class="abs" style="left:0;top:78px;width:286px;height:3px;background:#c6c9da"></div>
<div class="abs" style="left:0;top:81px;width:286px;height:755px;background:#dadde9;border-top:1px solid #8f93aa;border-right:2px solid #5f637d"></div>
<div class="abs" style="left:286px;top:78px;width:10px;height:758px;background:#9c9eb6"></div>
<div class="abs" style="left:0;top:107px;width:284px;height:1px;background:#9da0b6"></div>
<div class="abs" style="left:1px;top:86px;width:26px;height:23px;background:linear-gradient(#f4f5fa,#e8eaf3);border:1px solid #a4a7bc;border-bottom:none;border-radius:4px 4px 0 0"></div>
<div class="abs" style="left:29px;top:86px;width:26px;height:21px;background:linear-gradient(#c9ccdc,#b9bcd0);border:1px solid #a4a7bc;border-bottom:none;border-radius:4px 4px 0 0"></div>
<div class="abs" style="left:57px;top:86px;width:26px;height:21px;background:linear-gradient(#c9ccdc,#b9bcd0);border:1px solid #a4a7bc;border-bottom:none;border-radius:4px 4px 0 0"></div>
<div class="abs" style="left:85px;top:86px;width:26px;height:21px;background:linear-gradient(#c9ccdc,#b9bcd0);border:1px solid #a4a7bc;border-bottom:none;border-radius:4px 4px 0 0"></div>
<div class="abs" style="left:113px;top:86px;width:26px;height:21px;background:linear-gradient(#c9ccdc,#b9bcd0);border:1px solid #a4a7bc;border-bottom:none;border-radius:4px 4px 0 0"></div>
<svg class="abs" style="left:5px;top:89px" width="18" height="17" viewBox="0 0 18 17" ><path d="M1 4l5-3 5 6 4 0 2 5-6 4L1 6z" fill="#f2cc1c" stroke="#3a2c00" stroke-width="1.100"/><path d="M1 4l10 10v2M6 1l1 4-3 2M11 7l-2 3 2 4M9 10l6 0" fill="none" stroke="#3a2c00" stroke-width="1"/><path d="M3 6l6 6" stroke="#fff4a0" stroke-width="1"/></svg>
<svg class="abs" style="left:33px;top:89px" width="18" height="17" viewBox="0 0 18 17" ><path d="M2 6h12v10H2z" fill="#f6f6f2" stroke="#6b6b60"/><path d="M4 9h2v2H4zM4 12.500h2v2H4z" fill="#e8c040" stroke="#777" stroke-width=".5"/><path d="M8 10h5M8 13.500h5" stroke="#99a" stroke-width="1"/><path d="M4 6l5-4 8 1-3 4z" fill="#e8bd7c" stroke="#7a5418" stroke-width=".8"/></svg>
<svg class="abs" style="left:61px;top:88px" width="18" height="19" viewBox="0 0 18 19" ><path d="M2 1v15M4 1v15M4 5h5M4 13h7" stroke="#333" stroke-width="1"/><rect x="8" y="2" width="6" height="6" rx="1" fill="#f5d21f" stroke="#2a2200" stroke-width="1.200"/><rect x="10" y="10" width="6" height="6" rx="1" fill="#f5d21f" stroke="#2a2200" stroke-width="1.200"/></svg>
<svg class="abs" style="left:89px;top:89px" width="18" height="18" viewBox="0 0 18 18" ><circle cx="9" cy="9" r="5" fill="none" stroke="#c84ad8" stroke-width="2"/><path d="M9 1v16M1 9h16" stroke="#c84ad8" stroke-width="1.600"/></svg>
<svg class="abs" style="left:117px;top:89px" width="18" height="18" viewBox="0 0 18 18" ><circle cx="9" cy="9" r="8" fill="#e8c21a"/><path d="M9 9L3 3a8 8 0 0 1 12 0z" fill="#d8202a"/><path d="M9 9L3 3a8 8 0 0 0 0 12z" fill="#2a5ad8"/><path d="M9 9l-6 6a8 8 0 0 0 6 2z" fill="#2fb52f"/><path d="M11 3a5 5 0 0 0 6 5 8 8 0 0 0-4-6z" fill="#2a1010"/><circle cx="9" cy="9" r="8" fill="none" stroke="#555" stroke-width=".6"/></svg>
<div class="abs" style="left:185px;top:87px;font-family:'Liberation Sans',sans-serif;font-size:15px;line-height:18px;color:#3a3d66">«</div>
<svg class="abs" style="left:203px;top:89px" width="18" height="17" viewBox="0 0 18 17" ><path d="M4 1h7v6h4v6H2V6h2z" fill="#f2cc1c" stroke="#7a5c00" stroke-width="1"/><circle cx="4" cy="13" r="2.700" fill="#cfe4ff" stroke="#111" stroke-width="1.200"/><circle cx="11" cy="13" r="2.700" fill="#cfe4ff" stroke="#111" stroke-width="1.200"/><path d="M6.500 12.500h2M2 10l2-5M13 10l-2-5" stroke="#111" stroke-width="1.200" fill="none"/></svg>
<svg class="abs" style="left:224px;top:89px" width="18" height="17" viewBox="0 0 18 17" ><path d="M1.500 5.500l4-4h11v10l-4 4h-11z" fill="#3f8ee8" stroke="#0f2f80" stroke-width="1.200"/><path d="M1.500 5.500h11v10M12.500 5.500l4-4" fill="none" stroke="#0f2f80" stroke-width="1.200"/><path d="M3 7h8v7H3z" fill="#a8d4ff" opacity=".8"/></svg>
<svg class="abs" style="left:245px;top:89px" width="18" height="18" viewBox="0 0 18 18" ><circle cx="9" cy="9" r="8" fill="#2fb52f"/><path d="M9 9L3 3a8 8 0 0 1 12 0z" fill="#d8202a"/><path d="M9 9L3 3a8 8 0 0 0 0 12z" fill="#2a6ae8"/><path d="M9 9l6-6a8 8 0 0 1 1 10z" fill="#e8c21a"/><circle cx="9" cy="9" r="8" fill="none" stroke="#555" stroke-width=".6"/><ellipse cx="7" cy="5" rx="3" ry="2" fill="#fff" opacity=".45"/></svg>
<svg class="abs" style="left:266px;top:89px" width="17" height="17" viewBox="0 0 17 17" ><path d="M4 1h7v6h4v6H2V6h2z" fill="#f4e08a" stroke="#a89040" stroke-width="1"/><circle cx="4" cy="13" r="2.700" fill="#e4f0ff" stroke="#222" stroke-width="1.200"/><circle cx="11" cy="13" r="2.700" fill="#e4f0ff" stroke="#222" stroke-width="1.200"/><path d="M6.500 12.500h2M2 10l2-5M13 10l-2-5" stroke="#222" stroke-width="1.200" fill="none"/></svg>
<div class="abs" style="left:1px;top:111px;width:196px;height:16px;border:1px solid #8a8ea2;border-radius:8px;background:linear-gradient(#f4f5f9,#fff 40%,#fff)"></div>
<svg class="abs" style="left:8px;top:113px" width="12" height="12" viewBox="0 0 12 12" ><path d="M.5.5h11L7.500 5.500V11h-3V5.500z" fill="#5ab0f8" stroke="#1038a8" stroke-width="1"/><path d="M2 1.500h8" stroke="#c8e8ff"/></svg>
<div class="abs" style="left:198px;top:108px;width:86px;height:727px;background:#e1e4ee"></div>
<div class="abs" style="left:198px;top:108px;width:1px;height:727px;background:#c3c6d6"></div>
<div class="abs" style="left:223px;top:108px;width:1px;height:727px;background:#c3c6d6"></div>
<div class="abs" style="left:243px;top:108px;width:1px;height:727px;background:#c3c6d6"></div>
<div class="abs" style="left:263px;top:108px;width:1px;height:727px;background:#c3c6d6"></div>
<div class="abs" style="left:283px;top:82px;width:1px;height:753px;background:#f2f3f8"></div>
<div class="abs" style="left:0;top:129px;width:183px;height:687px;background:#e7e9f2"></div>
<svg class="abs" style="left:2px;top:130px" width="18" height="17" viewBox="0 0 18 17" ><path d="M1 4l5-3 5 6 4 0 2 5-6 4L1 6z" fill="#f2cc1c" stroke="#3a2c00" stroke-width="1.100"/><path d="M1 4l10 10v2M6 1l1 4-3 2M11 7l-2 3 2 4M9 10l6 0" fill="none" stroke="#3a2c00" stroke-width="1"/><path d="M3 6l6 6" stroke="#fff4a0" stroke-width="1"/></svg>
<div class="abs tt" style="left:23px;top:131px;white-space:pre">dragon woodcraft  (Default&lt;&lt;</div>
<div class="abs" style="left:0;top:148px;width:183px;height:2px;background:#e8a820"></div>
<div class="abs" style="left:10px;top:150px;width:0;height:666px;border-left:1px dotted #8a8d9e"></div>
<div class="abs" style="left:11px;top:157px;width:10px;height:0;border-top:1px dotted #8a8d9e"></div>
<svg class="abs" style="left:21px;top:149px" width="17" height="17" viewBox="0 0 17 17" ><path d="M1.500 2.500h5l1 2h8v11h-14z" fill="#f7d64a" stroke="#a27a08" stroke-width="1"/><path d="M2.500 5.500h12v9h-12z" fill="#fbe57c"/><circle cx="8.500" cy="10" r="3.600" fill="#f4f8ff" stroke="#2a49b8" stroke-width="1.200"/><path d="M8.500 10l2-2.500" stroke="#b02020" stroke-width="1"/></svg>
<div class="abs tt" style="left:42px;top:149px;color:#111">Sensors</div>
<div class="abs" style="left:15px;top:175px;width:6px;height:0;border-top:1px dotted #8a8d9e"></div>
<div class="abs pm" style="left:6px;top:171px"></div>
<svg class="abs" style="left:21px;top:167px" width="17" height="17" viewBox="0 0 17 17" ><path d="M1.500 2.500h5l1 2h8v11h-14z" fill="#f7d64a" stroke="#a27a08" stroke-width="1"/><path d="M2.500 5.500h12v9h-12z" fill="#fbe57c"/><text x="4.500" y="14.500" font-family="Liberation Serif,serif" font-weight="bold" font-size="12" fill="#1a2fd0">A</text></svg>
<div class="abs tt" style="left:42px;top:167px;color:#111">Annotations</div>
<div class="abs" style="left:15px;top:193px;width:6px;height:0;border-top:1px dotted #8a8d9e"></div>
<div class="abs pm" style="left:6px;top:189px"></div>
<svg class="abs" style="left:21px;top:185px" width="17" height="17" viewBox="0 0 17 17" ><path d="M1.500 2.500h5l1 2h8v11h-14z" fill="#f7d64a" stroke="#a27a08" stroke-width="1"/><path d="M2.500 5.500h12v9h-12z" fill="#fbe57c"/><path d="M5 7.500h5v5H5z" fill="#f5d21f" stroke="#2a2200" stroke-width="1.200"/><path d="M7.500 9.500h5v4h-5z" fill="#f5d21f" stroke="#2a2200" stroke-width="1.200"/></svg>
<div class="abs tt" style="left:42px;top:185px;color:#111">Solid Bodies(7)</div>
<div class="abs" style="left:11px;top:211px;width:10px;height:0;border-top:1px dotted #8a8d9e"></div>
<svg class="abs" style="left:21px;top:203px" width="17" height="17" viewBox="0 0 17 17" ><circle cx="3.500" cy="3" r="2.500" fill="#e02a2a" stroke="#801010" stroke-width=".6"/><circle cx="3.500" cy="8.500" r="2.500" fill="#3550e0" stroke="#101880" stroke-width=".6"/><circle cx="3.500" cy="14" r="2.500" fill="#2fc02f" stroke="#0a5a0a" stroke-width=".6"/><path d="M8 3h8M8 8.500h8M8 14h8" stroke="#222" stroke-width="1.600"/></svg>
<div class="abs tt" style="left:42px;top:203px;color:#111">Material &lt;not specified&gt;</div>
<div class="abs" style="left:11px;top:229px;width:10px;height:0;border-top:1px dotted #8a8d9e"></div>
<svg class="abs" style="left:21px;top:221px" width="17" height="17" viewBox="0 0 17 17" ><path d="M8.500 1.500l6.500 6.500-6.500 7L2 8z" fill="none" stroke="#222" stroke-width="1" stroke-dasharray="1.300 .9"/><path d="M5 4l8 9" stroke="#222" stroke-width="1"/><path d="M11 11l4 4" stroke="#222" stroke-width="1.200"/></svg>
<div class="abs tt" style="left:42px;top:221px;color:#111">Front Plane</div>
<div class="abs" style="left:11px;top:247px;width:10px;height:0;border-top:1px dotted #8a8d9e"></div>
<svg class="abs" style="left:21px;top:239px" width="17" height="17" viewBox="0 0 17 17" ><path d="M8.500 1.500l6.500 6.500-6.500 7L2 8z" fill="none" stroke="#222" stroke-width="1" stroke-dasharray="1.300 .9"/><path d="M5 4l8 9" stroke="#222" stroke-width="1"/><path d="M11 11l4 4" stroke="#222" stroke-width="1.200"/></svg>
<div class="abs tt" style="left:42px;top:239px;color:#111">Top Plane</div>
<div class="abs" style="left:11px;top:265px;width:10px;height:0;border-top:1px dotted #8a8d9e"></div>
<svg class="abs" style="left:21px;top:257px" width="17" height="17" viewBox="0 0 17 17" ><path d="M8.500 1.500l6.500 6.500-6.500 7L2 8z" fill="none" stroke="#222" stroke-width="1" stroke-dasharray="1.300 .9"/><path d="M5 4l8 9" stroke="#222" stroke-width="1"/><path d="M11 11l4 4" stroke="#222" stroke-width="1.200"/></svg>
<div class="abs tt" style="left:42px;top:257px;color:#111">Right Plane</div>
<div class="abs" style="left:11px;top:283px;width:10px;height:0;border-top:1px dotted #8a8d9e"></div>
<svg class="abs" style="left:21px;top:275px" width="17" height="17" viewBox="0 0 17 17" ><path d="M5.500 2v12M3 12h12" stroke="#b01020" stroke-width="1.200"/><path d="M5.500 0L3 4h5zM16 12l-4-2.500v5z" fill="#b01020"/><path d="M3 9.500l5 5M8 9.500l-5 5M5.500 9v6" stroke="#222" stroke-width=".9"/></svg>
<div class="abs tt" style="left:42px;top:275px;color:#111">Origin</div>
<div class="abs" style="left:15px;top:301px;width:6px;height:0;border-top:1px dotted #8a8d9e"></div>
<div class="abs pm" style="left:6px;top:297px"></div>
<svg class="abs" style="left:21px;top:293px" width="17" height="17" viewBox="0 0 17 17" ><path d="M1 4l3-3h9l1 1v8l-3 3H2L1 12z" fill="#f5d21f" stroke="#2e2400" stroke-width="1.200"/><path d="M1.500 4.500h9v9M10.500 4.500l3-3" fill="none" stroke="#2e2400"/><path d="M2.500 5.500h7v7h-7z" fill="#fff09a" opacity=".6"/><path d="M5 7h5v5H5z" fill="#fbe878" stroke="#2e2400" stroke-width="1"/><path d="M9.500 10.500h6v6h-6z" fill="#2fc02f" stroke="#0a5a0a" stroke-width="1"/><path d="M7 9l3 3" stroke="#0a5a0a" stroke-width="1.200"/></svg>
<div class="abs tt" style="left:42px;top:293px;color:#111">Boss-Extrude1</div>
<div class="abs" style="left:15px;top:319px;width:6px;height:0;border-top:1px dotted #8a8d9e"></div>
<div class="abs pm" style="left:6px;top:315px"></div>
<svg class="abs" style="left:21px;top:311px" width="17" height="17" viewBox="0 0 17 17" ><path d="M1 4l3-3h9l1 1v8l-3 3H2L1 12z" fill="#f5d21f" stroke="#2e2400" stroke-width="1.200"/><path d="M1.500 4.500h9v9M10.500 4.500l3-3" fill="none" stroke="#2e2400"/><path d="M2.500 5.500h7v7h-7z" fill="#fff09a" opacity=".6"/><path d="M5 7h5v5H5z" fill="#fbe878" stroke="#2e2400" stroke-width="1"/><path d="M9.500 10.500h6v6h-6z" fill="#2fc02f" stroke="#0a5a0a" stroke-width="1"/><path d="M7 9l3 3" stroke="#0a5a0a" stroke-width="1.200"/></svg>
<div class="abs tt" style="left:42px;top:311px;color:#111">Boss-Extrude2</div>
<div class="abs" style="left:15px;top:337px;width:6px;height:0;border-top:1px dotted #8a8d9e"></div>
<div class="abs pm" style="left:6px;top:333px"></div>
<svg class="abs" style="left:21px;top:329px" width="17" height="17" viewBox="0 0 17 17" ><path d="M1 4l3-3h9l1 1v8l-3 3H2L1 12z" fill="#f5d21f" stroke="#2e2400" stroke-width="1.200"/><path d="M1.500 4.500h9v9M10.500 4.500l3-3" fill="none" stroke="#2e2400"/><path d="M2.500 5.500h7v7h-7z" fill="#fff09a" opacity=".6"/><path d="M5 7h5v5H5z" fill="#fbe878" stroke="#2e2400" stroke-width="1"/><path d="M9.500 10.500h6v6h-6z" fill="#2fc02f" stroke="#0a5a0a" stroke-width="1"/><path d="M7 9l3 3" stroke="#0a5a0a" stroke-width="1.200"/></svg>
<div class="abs tt" style="left:42px;top:329px;color:#111">Boss-Extrude3</div>
<div class="abs" style="left:15px;top:355px;width:6px;height:0;border-top:1px dotted #8a8d9e"></div>
<div class="abs pm" style="left:6px;top:351px"></div>
<svg class="abs" style="left:21px;top:347px" width="17" height="17" viewBox="0 0 17 17" ><path d="M1 4l3-3h9l1 1v8l-3 3H2L1 12z" fill="#f5d21f" stroke="#2e2400" stroke-width="1.200"/><path d="M1.500 4.500h9v9M10.500 4.500l3-3" fill="none" stroke="#2e2400"/><path d="M2.500 5.500h7v7h-7z" fill="#fff09a" opacity=".6"/><path d="M5 7h5v5H5z" fill="#fbe878" stroke="#2e2400" stroke-width="1"/><path d="M9.500 10.500h6v6h-6z" fill="#2fc02f" stroke="#0a5a0a" stroke-width="1"/><path d="M7 9l3 3" stroke="#0a5a0a" stroke-width="1.200"/></svg>
<div class="abs tt" style="left:42px;top:347px;color:#111">Boss-Extrude4</div>
<div class="abs" style="left:15px;top:373px;width:6px;height:0;border-top:1px dotted #8a8d9e"></div>
<div class="abs pm" style="left:6px;top:369px"></div>
<svg class="abs" style="left:21px;top:365px" width="17" height="17" viewBox="0 0 17 17" ><path d="M1 4l3-3h9l1 1v8l-3 3H2L1 12z" fill="#f5d21f" stroke="#2e2400" stroke-width="1.200"/><path d="M1.500 4.500h9v9M10.500 4.500l3-3" fill="none" stroke="#2e2400"/><path d="M2.500 5.500h7v7h-7z" fill="#fff09a" opacity=".6"/><path d="M5 7h5v5H5z" fill="#fbe878" stroke="#2e2400" stroke-width="1"/><path d="M9.500 10.500h6v6h-6z" fill="#2fc02f" stroke="#0a5a0a" stroke-width="1"/><path d="M7 9l3 3" stroke="#0a5a0a" stroke-width="1.200"/></svg>
<div class="abs tt" style="left:42px;top:365px;color:#111">Boss-Extrude5</div>
<div class="abs" style="left:15px;top:391px;width:6px;height:0;border-top:1px dotted #8a8d9e"></div>
<div class="abs pm" style="left:6px;top:387px"></div>
<svg class="abs" style="left:21px;top:383px" width="17" height="17" viewBox="0 0 17 17" ><path d="M2 5l3-3h8v8l-3 3H2z" fill="#f4f5f9"/><g mask="url(#dm)"><path d="M1.500 4.500l3-3h9v9l-3 3h-9z" fill="none" stroke="#000" stroke-width="1.300"/><path d="M1.500 4.500h9v9M10.500 4.500l3-3" fill="none" stroke="#000" stroke-width="1"/><path d="M5 7.500h4.500v4.500H5z" fill="none" stroke="#000" stroke-width="1.200"/><circle cx="9.500" cy="11.500" r="2" fill="#000"/><path d="M10 12l4.500 4.500" stroke="#000" stroke-width="2.200"/></g></svg>
<div class="abs tt" style="left:42px;top:383px;color:#8a8b95">Boss-Extrude6</div>
<div class="abs" style="left:15px;top:409px;width:6px;height:0;border-top:1px dotted #8a8d9e"></div>
<div class="abs pm" style="left:6px;top:405px"></div>
<svg class="abs" style="left:21px;top:401px" width="17" height="17" viewBox="0 0 17 17" ><path d="M2 5l3-3h8v8l-3 3H2z" fill="#f4f5f9"/><g mask="url(#dm)"><path d="M1.500 4.500l3-3h9v9l-3 3h-9z" fill="none" stroke="#000" stroke-width="1.300"/><path d="M1.500 4.500h9v9M10.500 4.500l3-3" fill="none" stroke="#000" stroke-width="1"/><path d="M5 7.500h4.500v4.500H5z" fill="none" stroke="#000" stroke-width="1.200"/><circle cx="9.500" cy="11.500" r="2" fill="#000"/><path d="M10 12l4.500 4.500" stroke="#000" stroke-width="2.200"/></g></svg>
<div class="abs tt" style="left:42px;top:401px;color:#8a8b95">Boss-Extrude7</div>
<div class="abs" style="left:15px;top:427px;width:6px;height:0;border-top:1px dotted #8a8d9e"></div>
<div class="abs pm" style="left:6px;top:423px"></div>
<svg class="abs" style="left:21px;top:419px" width="17" height="17" viewBox="0 0 17 17" ><path d="M2 5l3-3h8v8l-3 3H2z" fill="#f4f5f9"/><g mask="url(#dm)"><path d="M1.500 4.500l3-3h9v9l-3 3h-9z" fill="none" stroke="#000" stroke-width="1.300"/><path d="M1.500 4.500h9v9M10.500 4.500l3-3" fill="none" stroke="#000" stroke-width="1"/><path d="M5 7.500h4.500v4.500H5z" fill="none" stroke="#000" stroke-width="1.200"/><circle cx="9.500" cy="11.500" r="2" fill="#000"/><path d="M10 12l4.500 4.500" stroke="#000" stroke-width="2.200"/></g></svg>
<div class="abs tt" style="left:42px;top:419px;color:#8a8b95">Boss-Extrude8</div>
<div class="abs" style="left:15px;top:445px;width:6px;height:0;border-top:1px dotted #8a8d9e"></div>
<div class="abs pm" style="left:6px;top:441px"></div>
<svg class="abs" style="left:21px;top:437px" width="17" height="17" viewBox="0 0 17 17" ><path d="M2 5l3-3h8v8l-3 3H2z" fill="#f4f5f9"/><g mask="url(#dm)"><path d="M1.500 4.500l3-3h9v9l-3 3h-9z" fill="none" stroke="#000" stroke-width="1.300"/><path d="M1.500 4.500h9v9M10.500 4.500l3-3" fill="none" stroke="#000" stroke-width="1"/><path d="M5 7.500h4.500v4.500H5z" fill="none" stroke="#000" stroke-width="1.200"/><circle cx="9.500" cy="11.500" r="2" fill="#000"/><path d="M10 12l4.500 4.500" stroke="#000" stroke-width="2.200"/></g></svg>
<div class="abs tt" style="left:42px;top:437px;color:#8a8b95">Boss-Extrude9</div>
<div class="abs" style="left:15px;top:463px;width:6px;height:0;border-top:1px dotted #8a8d9e"></div>
<div class="abs pm" style="left:6px;top:459px"></div>
<svg class="abs" style="left:21px;top:455px" width="17" height="17" viewBox="0 0 17 17" ><path d="M2 5l3-3h8v8l-3 3H2z" fill="#f4f5f9"/><g mask="url(#dm)"><path d="M1.500 4.500l3-3h9v9l-3 3h-9z" fill="none" stroke="#000" stroke-width="1.300"/><path d="M1.500 4.500h9v9M10.500 4.500l3-3" fill="none" stroke="#000" stroke-width="1"/><path d="M5 7.500h4.500v4.500H5z" fill="none" stroke="#000" stroke-width="1.200"/><circle cx="9.500" cy="11.500" r="2" fill="#000"/><path d="M10 12l4.500 4.500" stroke="#000" stroke-width="2.200"/></g></svg>
<div class="abs tt" style="left:42px;top:455px;color:#8a8b95">Boss-Extrude10</div>
<div class="abs" style="left:15px;top:481px;width:6px;height:0;border-top:1px dotted #8a8d9e"></div>
<div class="abs pm" style="left:6px;top:477px"></div>
<svg class="abs" style="left:21px;top:473px" width="17" height="17" viewBox="0 0 17 17" ><path d="M2 5l3-3h9v9l-3 3H2z" fill="#f4f5f9"/><g mask="url(#dm)"><path d="M1.500 4.500l3-3h10v10l-3 3h-10z" fill="none" stroke="#000" stroke-width="1.300"/><path d="M1.500 4.500h10v10M11.500 4.500l3-3" fill="none" stroke="#000" stroke-width="1"/><path d="M4 7h5.500v5.500H4z" fill="none" stroke="#000" stroke-width="1.200"/><path d="M4.500 7.500l4.500 4.500M9 7.500l-4.500 4.500" stroke="#000" stroke-width="1.200"/></g></svg>
<div class="abs tt" style="left:42px;top:473px;color:#8a8b95">Cut-Extrude1</div>
<div class="abs" style="left:15px;top:499px;width:6px;height:0;border-top:1px dotted #8a8d9e"></div>
<div class="abs pm" style="left:6px;top:495px"></div>
<svg class="abs" style="left:21px;top:491px" width="17" height="17" viewBox="0 0 17 17" ><path d="M2 5l3-3h8v8l-3 3H2z" fill="#f4f5f9"/><g mask="url(#dm)"><path d="M1.500 4.500l3-3h9v9l-3 3h-9z" fill="none" stroke="#000" stroke-width="1.300"/><path d="M1.500 4.500h9v9M10.500 4.500l3-3" fill="none" stroke="#000" stroke-width="1"/><path d="M5 7.500h4.500v4.500H5z" fill="none" stroke="#000" stroke-width="1.200"/><circle cx="9.500" cy="11.500" r="2" fill="#000"/><path d="M10 12l4.500 4.500" stroke="#000" stroke-width="2.200"/></g></svg>
<div class="abs tt" style="left:42px;top:491px;color:#8a8b95">Boss-Extrude11</div>
<div class="abs" style="left:15px;top:517px;width:6px;height:0;border-top:1px dotted #8a8d9e"></div>
<div class="abs pm" style="left:6px;top:513px"></div>
<svg class="abs" style="left:21px;top:509px" width="17" height="17" viewBox="0 0 17 17" ><path d="M2 5l3-3h8v8l-3 3H2z" fill="#f4f5f9"/><g mask="url(#dm)"><path d="M1.500 4.500l3-3h9v9l-3 3h-9z" fill="none" stroke="#000" stroke-width="1.300"/><path d="M1.500 4.500h9v9M10.500 4.500l3-3" fill="none" stroke="#000" stroke-width="1"/><path d="M5 7.500h4.500v4.500H5z" fill="none" stroke="#000" stroke-width="1.200"/><circle cx="9.500" cy="11.500" r="2" fill="#000"/><path d="M10 12l4.500 4.500" stroke="#000" stroke-width="2.200"/></g></svg>
<div class="abs tt" style="left:42px;top:509px;color:#8a8b95">Boss-Extrude12</div>
<div class="abs" style="left:11px;top:535px;width:10px;height:0;border-top:1px dotted #8a8d9e"></div>
<svg class="abs" style="left:21px;top:527px" width="17" height="17" viewBox="0 0 17 17" ><path d="M1.500 8C1.500 4 4 1.500 8 1.500h7v8l-4 5.500h-9.500z" fill="#eceef4"/><g mask="url(#dm)"><path d="M1.500 8C1.500 4 4 1.500 8 1.500h7v8l-4 5.500h-9.500z" fill="none" stroke="#000" stroke-width="1.300"/><path d="M1.500 8.500C3 5.500 6 5 11 5.500v9.500M11 5.500l4-4" fill="none" stroke="#000" stroke-width="1"/></g></svg>
<div class="abs tt" style="left:42px;top:527px;color:#8a8b95">Fillet1</div>
<div class="abs" style="left:15px;top:553px;width:6px;height:0;border-top:1px dotted #8a8d9e"></div>
<div class="abs pm" style="left:6px;top:549px"></div>
<svg class="abs" style="left:21px;top:545px" width="17" height="17" viewBox="0 0 17 17" ><path d="M2 5l3-3h9v9l-3 3H2z" fill="#f4f5f9"/><g mask="url(#dm)"><path d="M1.500 4.500l3-3h10v10l-3 3h-10z" fill="none" stroke="#000" stroke-width="1.300"/><path d="M1.500 4.500h10v10M11.500 4.500l3-3" fill="none" stroke="#000" stroke-width="1"/><path d="M4 7h5.500v5.500H4z" fill="none" stroke="#000" stroke-width="1.200"/><path d="M4.500 7.500l4.500 4.500M9 7.500l-4.500 4.500" stroke="#000" stroke-width="1.200"/></g></svg>
<div class="abs tt" style="left:42px;top:545px;color:#8a8b95">Cut-Extrude3</div>
<div class="abs" style="left:15px;top:571px;width:6px;height:0;border-top:1px dotted #8a8d9e"></div>
<div class="abs pm" style="left:6px;top:567px"></div>
<svg class="abs" style="left:21px;top:563px" width="17" height="17" viewBox="0 0 17 17" ><path d="M2 5l3-3h9v9l-3 3H2z" fill="#f4f5f9"/><g mask="url(#dm)"><path d="M1.500 4.500l3-3h10v10l-3 3h-10z" fill="none" stroke="#000" stroke-width="1.300"/><path d="M1.500 4.500h10v10M11.500 4.500l3-3" fill="none" stroke="#000" stroke-width="1"/><path d="M4 7h5.500v5.500H4z" fill="none" stroke="#000" stroke-width="1.200"/><path d="M4.500 7.500l4.500 4.500M9 7.500l-4.500 4.500" stroke="#000" stroke-width="1.200"/></g></svg>
<div class="abs tt" style="left:42px;top:563px;color:#8a8b95">Cut-Extrude4</div>
<div class="abs" style="left:11px;top:589px;width:10px;height:0;border-top:1px dotted #8a8d9e"></div>
<svg class="abs" style="left:21px;top:581px" width="17" height="17" viewBox="0 0 17 17" ><path d="M1.500 8C1.500 4 4 1.500 8 1.500h7v8l-4 5.500h-9.500z" fill="#eceef4"/><g mask="url(#dm)"><path d="M1.500 8C1.500 4 4 1.500 8 1.500h7v8l-4 5.500h-9.500z" fill="none" stroke="#000" stroke-width="1.300"/><path d="M1.500 8.500C3 5.500 6 5 11 5.500v9.500M11 5.500l4-4" fill="none" stroke="#000" stroke-width="1"/></g></svg>
<div class="abs tt" style="left:42px;top:581px;color:#8a8b95">Fillet2</div>
<div class="abs" style="left:15px;top:607px;width:6px;height:0;border-top:1px dotted #8a8d9e"></div>
<div class="abs pm" style="left:6px;top:603px"></div>
<svg class="abs" style="left:21px;top:599px" width="17" height="17" viewBox="0 0 17 17" ><path d="M2 5l3-3h9v9l-3 3H2z" fill="#f4f5f9"/><g mask="url(#dm)"><path d="M1.500 4.500l3-3h10v10l-3 3h-10z" fill="none" stroke="#000" stroke-width="1.300"/><path d="M1.500 4.500h10v10M11.500 4.500l3-3" fill="none" stroke="#000" stroke-width="1"/><path d="M4 7h5.500v5.500H4z" fill="none" stroke="#000" stroke-width="1.200"/><path d="M4.500 7.500l4.500 4.500M9 7.500l-4.500 4.500" stroke="#000" stroke-width="1.200"/></g></svg>
<div class="abs tt" style="left:42px;top:599px;color:#8a8b95">Cut-Extrude6</div>
<div class="abs" style="left:15px;top:625px;width:6px;height:0;border-top:1px dotted #8a8d9e"></div>
<div class="abs pm" style="left:6px;top:621px"></div>
<svg class="abs" style="left:21px;top:617px" width="17" height="17" viewBox="0 0 17 17" ><path d="M2 5l3-3h9v9l-3 3H2z" fill="#f4f5f9"/><g mask="url(#dm)"><path d="M1.500 4.500l3-3h10v10l-3 3h-10z" fill="none" stroke="#000" stroke-width="1.300"/><path d="M1.500 4.500h10v10M11.500 4.500l3-3" fill="none" stroke="#000" stroke-width="1"/><path d="M4 7h5.500v5.500H4z" fill="none" stroke="#000" stroke-width="1.200"/><path d="M4.500 7.500l4.500 4.500M9 7.500l-4.500 4.500" stroke="#000" stroke-width="1.200"/></g></svg>
<div class="abs tt" style="left:42px;top:617px;color:#8a8b95">Cut-Extrude7</div>
<div class="abs" style="left:15px;top:643px;width:6px;height:0;border-top:1px dotted #8a8d9e"></div>
<div class="abs pm" style="left:6px;top:639px"></div>
<svg class="abs" style="left:21px;top:635px" width="17" height="17" viewBox="0 0 17 17" ><path d="M2 5l3-3h9v9l-3 3H2z" fill="#f4f5f9"/><g mask="url(#dm)"><path d="M1.500 4.500l3-3h10v10l-3 3h-10z" fill="none" stroke="#000" stroke-width="1.300"/><path d="M1.500 4.500h10v10M11.500 4.500l3-3" fill="none" stroke="#000" stroke-width="1"/><path d="M4 7h5.500v5.500H4z" fill="none" stroke="#000" stroke-width="1.200"/><path d="M4.500 7.500l4.500 4.500M9 7.500l-4.500 4.500" stroke="#000" stroke-width="1.200"/></g></svg>
<div class="abs tt" style="left:42px;top:635px;color:#8a8b95">Cut-Extrude8</div>
<div class="abs" style="left:15px;top:661px;width:6px;height:0;border-top:1px dotted #8a8d9e"></div>
<div class="abs pm" style="left:6px;top:657px"></div>
<svg class="abs" style="left:21px;top:653px" width="17" height="17" viewBox="0 0 17 17" ><path d="M2 5l3-3h9v9l-3 3H2z" fill="#f4f5f9"/><g mask="url(#dm)"><path d="M1.500 4.500l3-3h10v10l-3 3h-10z" fill="none" stroke="#000" stroke-width="1.300"/><path d="M1.500 4.500h10v10M11.500 4.500l3-3" fill="none" stroke="#000" stroke-width="1"/><path d="M4 7h5.500v5.500H4z" fill="none" stroke="#000" stroke-width="1.200"/><path d="M4.500 7.500l4.500 4.500M9 7.500l-4.500 4.500" stroke="#000" stroke-width="1.200"/></g></svg>
<div class="abs tt" style="left:42px;top:653px;color:#8a8b95">Cut-Extrude5</div>
<div class="abs" style="left:15px;top:679px;width:6px;height:0;border-top:1px dotted #8a8d9e"></div>
<div class="abs pm" style="left:6px;top:675px"></div>
<svg class="abs" style="left:21px;top:671px" width="17" height="17" viewBox="0 0 17 17" ><path d="M2 5l3-3h8v8l-3 3H2z" fill="#f4f5f9"/><g mask="url(#dm)"><path d="M1.500 4.500l3-3h9v9l-3 3h-9z" fill="none" stroke="#000" stroke-width="1.300"/><path d="M1.500 4.500h9v9M10.500 4.500l3-3" fill="none" stroke="#000" stroke-width="1"/><path d="M5 7.500h4.500v4.500H5z" fill="none" stroke="#000" stroke-width="1.200"/><circle cx="9.500" cy="11.500" r="2" fill="#000"/><path d="M10 12l4.500 4.500" stroke="#000" stroke-width="2.200"/></g></svg>
<div class="abs tt" style="left:42px;top:671px;color:#8a8b95">Boss-Extrude13</div>
<div class="abs" style="left:15px;top:697px;width:6px;height:0;border-top:1px dotted #8a8d9e"></div>
<div class="abs pm" style="left:6px;top:693px"></div>
<svg class="abs" style="left:21px;top:689px" width="17" height="17" viewBox="0 0 17 17" ><path d="M2 5l3-3h9v9l-3 3H2z" fill="#f4f5f9"/><g mask="url(#dm)"><path d="M1.500 4.500l3-3h10v10l-3 3h-10z" fill="none" stroke="#000" stroke-width="1.300"/><path d="M1.500 4.500h10v10M11.500 4.500l3-3" fill="none" stroke="#000" stroke-width="1"/><path d="M4 7h5.500v5.500H4z" fill="none" stroke="#000" stroke-width="1.200"/><path d="M4.500 7.500l4.500 4.500M9 7.500l-4.500 4.500" stroke="#000" stroke-width="1.200"/></g></svg>
<div class="abs tt" style="left:42px;top:689px;color:#8a8b95">Cut-Extrude9</div>
<div class="abs" style="left:11px;top:715px;width:10px;height:0;border-top:1px dotted #8a8d9e"></div>
<svg class="abs" style="left:21px;top:707px" width="17" height="17" viewBox="0 0 17 17" ><path d="M1.500 8C1.500 4 4 1.500 8 1.500h7v8l-4 5.500h-9.500z" fill="#eceef4"/><g mask="url(#dm)"><path d="M1.500 8C1.500 4 4 1.500 8 1.500h7v8l-4 5.500h-9.500z" fill="none" stroke="#000" stroke-width="1.300"/><path d="M1.500 8.500C3 5.500 6 5 11 5.500v9.500M11 5.500l4-4" fill="none" stroke="#000" stroke-width="1"/></g></svg>
<div class="abs tt" style="left:42px;top:707px;color:#8a8b95">Fillet3</div>
<div class="abs" style="left:11px;top:733px;width:10px;height:0;border-top:1px dotted #8a8d9e"></div>
<svg class="abs" style="left:21px;top:725px" width="17" height="17" viewBox="0 0 17 17" ><path d="M1.500 8C1.500 4 4 1.500 8 1.500h7v8l-4 5.500h-9.500z" fill="#eceef4"/><g mask="url(#dm)"><path d="M1.500 8C1.500 4 4 1.500 8 1.500h7v8l-4 5.500h-9.500z" fill="none" stroke="#000" stroke-width="1.300"/><path d="M1.500 8.500C3 5.500 6 5 11 5.500v9.500M11 5.500l4-4" fill="none" stroke="#000" stroke-width="1"/></g></svg>
<div class="abs tt" style="left:42px;top:725px;color:#8a8b95">Fillet4</div>
<div class="abs" style="left:15px;top:751px;width:6px;height:0;border-top:1px dotted #8a8d9e"></div>
<div class="abs pm" style="left:6px;top:747px"></div>
<svg class="abs" style="left:21px;top:743px" width="17" height="17" viewBox="0 0 17 17" ><path d="M2 5l3-3h9v9l-3 3H2z" fill="#f4f5f9"/><g mask="url(#dm)"><path d="M1.500 4.500l3-3h10v10l-3 3h-10z" fill="none" stroke="#000" stroke-width="1.300"/><path d="M1.500 4.500h10v10M11.500 4.500l3-3" fill="none" stroke="#000" stroke-width="1"/><path d="M4 7h5.500v5.500H4z" fill="none" stroke="#000" stroke-width="1.200"/><path d="M4.500 7.500l4.500 4.500M9 7.500l-4.500 4.500" stroke="#000" stroke-width="1.200"/></g></svg>
<div class="abs tt" style="left:42px;top:743px;color:#8a8b95">Cut-Extrude10</div>
<div class="abs" style="left:15px;top:769px;width:6px;height:0;border-top:1px dotted #8a8d9e"></div>
<div class="abs pm" style="left:6px;top:765px"></div>
<svg class="abs" style="left:21px;top:761px" width="17" height="17" viewBox="0 0 17 17" ><path d="M2 5l3-3h9v9l-3 3H2z" fill="#f4f5f9"/><g mask="url(#dm)"><path d="M1.500 4.500l3-3h10v10l-3 3h-10z" fill="none" stroke="#000" stroke-width="1.300"/><path d="M1.500 4.500h10v10M11.500 4.500l3-3" fill="none" stroke="#000" stroke-width="1"/><path d="M4 7h5.500v5.500H4z" fill="none" stroke="#000" stroke-width="1.200"/><path d="M4.500 7.500l4.500 4.500M9 7.500l-4.500 4.500" stroke="#000" stroke-width="1.200"/></g></svg>
<div class="abs tt" style="left:42px;top:761px;color:#8a8b95">Cut-Extrude11</div>
<div class="abs" style="left:15px;top:787px;width:6px;height:0;border-top:1px dotted #8a8d9e"></div>
<div class="abs pm" style="left:6px;top:783px"></div>
<svg class="abs" style="left:21px;top:779px" width="17" height="17" viewBox="0 0 17 17" ><path d="M2 5l3-3h9v9l-3 3H2z" fill="#f4f5f9"/><g mask="url(#dm)"><path d="M1.500 4.500l3-3h10v10l-3 3h-10z" fill="none" stroke="#000" stroke-width="1.300"/><path d="M1.500 4.500h10v10M11.500 4.500l3-3" fill="none" stroke="#000" stroke-width="1"/><path d="M4 7h5.500v5.500H4z" fill="none" stroke="#000" stroke-width="1.200"/><path d="M4.500 7.500l4.500 4.500M9 7.500l-4.500 4.500" stroke="#000" stroke-width="1.200"/></g></svg>
<div class="abs tt" style="left:42px;top:779px;color:#8a8b95">Cut-Extrude2</div>
<div class="abs" style="left:11px;top:805px;width:10px;height:0;border-top:1px dotted #8a8d9e"></div>
<svg class="abs" style="left:21px;top:797px" width="17" height="17" viewBox="0 0 17 17" ><path d="M8.500 1.500l6.500 6.500-6.500 7L2 8z" fill="none" stroke="#9a9dab" stroke-width="1" stroke-dasharray="1.300 .9"/><path d="M5 4l8 9" stroke="#9a9dab" stroke-width="1"/><path d="M11 11l4 4" stroke="#9a9dab" stroke-width="1.200"/></svg>
<div class="abs tt" style="left:42px;top:797px;color:#8a8b95">Plane1</div>
<div class="abs" style="left:0;top:383px;width:183px;height:2px;background:#2a62c8"></div>
<div class="abs" style="left:245px;top:131px;width:16px;height:16px;background:#1a1a1a;border:1px solid #000"></div><div class="abs" style="left:246px;top:132px;width:14px;height:14px;border-radius:7px;background:radial-gradient(circle at 35% 30%,#b8b8b8,#444 60%,#222)"></div>
<svg class="abs" style="left:204px;top:221px" width="17" height="17" viewBox="0 0 17 17" ><path d="M8.500 1.500l6.500 6.500-6.500 7L2 8z" fill="none" stroke="#222" stroke-width="1" stroke-dasharray="1.300 .9"/><path d="M5 4l8 9" stroke="#222" stroke-width="1"/><path d="M11 11l4 4" stroke="#222" stroke-width="1.200"/></svg>
<svg class="abs" style="left:204px;top:239px" width="17" height="17" viewBox="0 0 17 17" ><path d="M8.500 1.500l6.500 6.500-6.500 7L2 8z" fill="none" stroke="#222" stroke-width="1" stroke-dasharray="1.300 .9"/><path d="M5 4l8 9" stroke="#222" stroke-width="1"/><path d="M11 11l4 4" stroke="#222" stroke-width="1.200"/></svg>
<svg class="abs" style="left:204px;top:257px" width="17" height="17" viewBox="0 0 17 17" ><path d="M8.500 1.500l6.500 6.500-6.500 7L2 8z" fill="none" stroke="#222" stroke-width="1" stroke-dasharray="1.300 .9"/><path d="M5 4l8 9" stroke="#222" stroke-width="1"/><path d="M11 11l4 4" stroke="#222" stroke-width="1.200"/></svg>
<svg class="abs" style="left:204px;top:275px" width="17" height="17" viewBox="0 0 17 17" ><path d="M5.500 2v12M3 12h12" stroke="#b01020" stroke-width="1.200"/><path d="M5.500 0L3 4h5zM16 12l-4-2.500v5z" fill="#b01020"/><path d="M3 9.500l5 5M8 9.500l-5 5M5.500 9v6" stroke="#222" stroke-width=".9"/></svg>
<svg class="abs" style="left:204px;top:797px" width="17" height="17" viewBox="0 0 17 17" ><path d="M8.500 1.500l6.500 6.500-6.500 7L2 8z" fill="none" stroke="#222" stroke-width="1" stroke-dasharray="1.300 .9"/><path d="M5 4l8 9" stroke="#222" stroke-width="1"/><path d="M11 11l4 4" stroke="#222" stroke-width="1.200"/></svg>
<div class="abs" style="left:183px;top:129px;width:15px;height:687px;background:#eceef4;border-left:1px solid #d4d6e0"></div>
<svg class="abs" style="left:187px;top:136px" width="7" height="4" viewBox="0 0 7 4" ><path d="M0 4L3.500 0 7 4z" fill="#444"/></svg>
<svg class="abs" style="left:187px;top:805px" width="7" height="4" viewBox="0 0 7 4" ><path d="M0 0L3.500 4 7 0z" fill="#444"/></svg>
<div class="abs" style="left:183px;top:150px;width:15px;height:409px;border:1px solid #9a9ca8;border-radius:2px;background:linear-gradient(90deg,#e8e8ec,#fdfdfe 25%,#e2e3e8 60%,#c4c5ce)"></div>
<div class="abs" style="left:187px;top:349px;width:7px;height:1px;background:#555;box-shadow:0 3px 0 #555,0 6px 0 #555"></div>
<div class="abs" style="left:0;top:816px;width:198px;height:19px;background:#eceef4"></div>
<svg class="abs" style="left:5px;top:820px" width="4" height="7" viewBox="0 0 4 7" ><path d="M4 0L0 3.500 4 7z" fill="#444"/></svg>
<svg class="abs" style="left:172px;top:820px" width="4" height="7" viewBox="0 0 4 7" ><path d="M0 0l4 3.500L0 7z" fill="#444"/></svg>
<div class="abs" style="left:17px;top:817px;width:82px;height:14px;border:1px solid #9a9ca8;border-radius:2px;background:linear-gradient(#f4f4f6,#e2e3e8 50%,#cfd0d8)"></div>
<div class="abs" style="left:55px;top:820px;width:1px;height:7px;background:#555;box-shadow:3px 0 0 #555,6px 0 0 #555"></div>
<div class="abs" style="left:285px;top:433px;width:9px;height:28px;background:#e1e4ee;border:1px solid #5f637d;border-left:none;border-radius:0 3px 3px 0"></div><div class="abs" style="left:283px;top:434px;width:4px;height:26px;background:#e1e4ee"></div><svg class="abs" style="left:288px;top:437px" width="4" height="21" viewBox="0 0 4 21" ><path d="M3.500 0L0 2.500 3.500 5zM3.500 8L0 10.500 3.500 13zM3.500 16L0 18.500 3.500 21z" fill="#6a6d98"/></svg>
<div class="abs" style="left:1598px;top:58px;width:2px;height:778px;background:#cdd0e0"></div>
<svg class="abs" style="left:1484px;top:66px" width="13" height="13" viewBox="0 0 13 13" ><path d="M.5.5h12v12H.5z" fill="#e4e6ee" stroke="#5a5d70"/><path d="M7 3v7M6 3.500L3 6.500l3 3z" fill="#5a5d70" stroke="#5a5d70" stroke-width="1"/></svg>
<svg class="abs" style="left:1507px;top:66px" width="13" height="13" viewBox="0 0 13 13" ><path d="M.5.5h12v12H.5z" fill="#e4e6ee" stroke="#5a5d70"/><path d="M5 3v7M7 3.500l3 3-3 3z" fill="#5a5d70" stroke="#5a5d70" stroke-width="1"/></svg>
<div class="abs" style="left:1530px;top:74px;width:12px;height:5px;border:1px solid #5a5d70;background:#e4e6ee"></div>
<svg class="abs" style="left:1551px;top:66px" width="17" height="14" viewBox="0 0 17 14" ><path d="M4.500 1.500h11v7h-11z" fill="none" stroke="#5a5d70" stroke-width="1.200"/><path d="M1.500 5.500h10v7h-10z" fill="#b4b6c8" stroke="#5a5d70" stroke-width="1.200"/><path d="M3.500 7.500h6v3h-6z" fill="#e4e6ee" stroke="#5a5d70" stroke-width=".8"/></svg>
<svg class="abs" style="left:1576px;top:67px" width="14" height="12" viewBox="0 0 14 12" ><path d="M1 1h3l3 3.500L10 1h3L8.500 6 13 11h-3L7 7.500 4 11H1l4.500-5z" fill="#e4e6ee" stroke="#5a5d70" stroke-width="1"/></svg>
<div class="abs" style="left:1577px;top:119px;width:26px;height:23px;background:#c9ccdc;border:1px solid #8f93aa;border-radius:4px 0 0 4px"></div>
<div class="abs" style="left:1577px;top:143px;width:26px;height:23px;background:#c9ccdc;border:1px solid #8f93aa;border-radius:4px 0 0 4px"></div>
<div class="abs" style="left:1577px;top:167px;width:26px;height:23px;background:#c9ccdc;border:1px solid #8f93aa;border-radius:4px 0 0 4px"></div>
<div class="abs" style="left:1577px;top:191px;width:26px;height:23px;background:#c9ccdc;border:1px solid #8f93aa;border-radius:4px 0 0 4px"></div>
<div class="abs" style="left:1577px;top:215px;width:26px;height:23px;background:#eceef4;border:1px solid #8f93aa;border-radius:4px 0 0 4px"></div>
<div class="abs" style="left:1577px;top:239px;width:26px;height:23px;background:#c9ccdc;border:1px solid #8f93aa;border-radius:4px 0 0 4px"></div>
<svg class="abs" style="left:1580px;top:121px" width="18" height="18" viewBox="0 0 18 18" ><path d="M1 9l8-7 8 7-2 0v8H3V9z" fill="#f7d64a" stroke="#5a4000" stroke-width="1.200"/><path d="M3 9l6-5 6 5v8H3z" fill="#fff3a8" stroke="#5a4000" stroke-width=".6"/><path d="M7 11h4v6H7z" fill="#e8b820" stroke="#5a4000" stroke-width=".8"/><path d="M13 2h2v4l-2-2z" fill="#d82020"/></svg>
<svg class="abs" style="left:1580px;top:145px" width="18" height="18" viewBox="0 0 18 18" ><path d="M1 8l3-2 3 2v8H1z" fill="#2fb52f" stroke="#0a5a0a"/><path d="M5 6l3-3 3 3v10H5z" fill="#f2cc1c" stroke="#6a5000"/><path d="M10 4l3-3 3 3v12h-6z" fill="#6a9ae8" stroke="#1a3a8a"/><path d="M4 1l1.500 3M7 0v3" stroke="#a02020"/></svg>
<svg class="abs" style="left:1580px;top:170px" width="18" height="16" viewBox="0 0 18 16" ><path d="M1 14V2h5l2 2h7v10z" fill="#e9b83a" stroke="#7a5a08"/><path d="M1 14l3-8h13l-3 8z" fill="#fbe27a" stroke="#7a5a08"/></svg>
<svg class="abs" style="left:1580px;top:193px" width="18" height="19" viewBox="0 0 18 19" ><path d="M.5.5h16v12H.5z" fill="#f4f6fa" stroke="#1a2a6a" stroke-width="1.200"/><path d="M3 3h5v3H3zM10 3h5v2h-5zM10 7h5v2h-5z" fill="#e8c040" stroke="#1a2a6a" stroke-width=".6"/><path d="M3 8h5v3H3z" fill="#f4d870"/><path d="M1 16h5" stroke="#1a1ad0" stroke-width="2"/><path d="M5 13l4 3-4 3z" fill="#1a1ad0"/></svg>
<svg class="abs" style="left:1580px;top:217px" width="18" height="18" viewBox="0 0 18 18" ><circle cx="9" cy="9" r="8" fill="#2fb52f"/><path d="M9 9L3 3a8 8 0 0 1 12 0z" fill="#d8202a"/><path d="M9 9L3 3a8 8 0 0 0 0 12z" fill="#2a6ae8"/><path d="M9 9l6-6a8 8 0 0 1 1 10z" fill="#e8c21a"/><circle cx="9" cy="9" r="8" fill="none" stroke="#555" stroke-width=".6"/><ellipse cx="7" cy="5" rx="3" ry="2" fill="#fff" opacity=".45"/></svg>
<svg class="abs" style="left:1580px;top:241px" width="18" height="18" viewBox="0 0 18 18" ><path d="M2 6h12v11H2z" fill="#f6f6f2" stroke="#6b6b60"/><path d="M4 9h8M4 11.500h8M4 14h8" stroke="#99a" stroke-width="1"/><path d="M4 6l5-4 8 1-3 4z" fill="#e8bd7c" stroke="#7a5418" stroke-width=".8"/><path d="M9 2l2 4M12 2l1 4" stroke="#7a5418" stroke-width=".6"/></svg>
<div class="abs" style="left:0;top:835px;width:296px;height:1px;background:#5f637d"></div>
<div class="abs" style="left:0;top:836px;width:1600px;height:15px;background:#e1e3ee"></div>
<div class="abs" style="left:0;top:851px;width:1600px;height:1px;background:#6f7289"></div>
<div class="abs" style="left:2px;top:837px;width:17px;height:14px;background:#b9bccf;border:1px solid #9da0b5"></div>
<div class="abs" style="left:19px;top:837px;width:17px;height:14px;background:#b9bccf;border:1px solid #9da0b5"></div>
<div class="abs" style="left:36px;top:837px;width:17px;height:14px;background:#b9bccf;border:1px solid #9da0b5"></div>
<div class="abs" style="left:53px;top:837px;width:17px;height:14px;background:#b9bccf;border:1px solid #9da0b5"></div>
<svg class="abs" style="left:5px;top:840px" width="11" height="9" viewBox="0 0 11 9" ><path d="M1 0v9" stroke="#8f92a8" stroke-width="1.500"/><path d="M9 0L3 4.500 9 9z" fill="#8f92a8"/></svg>
<svg class="abs" style="left:23px;top:840px" width="9" height="9" viewBox="0 0 9 9" ><path d="M7 0L1 4.500 7 9z" fill="#8f92a8"/></svg>
<svg class="abs" style="left:40px;top:840px" width="9" height="9" viewBox="0 0 9 9" ><path d="M1 0l6 4.500L1 9z" fill="#8f92a8"/></svg>
<svg class="abs" style="left:56px;top:840px" width="11" height="9" viewBox="0 0 11 9" ><path d="M9 0v9" stroke="#8f92a8" stroke-width="1.500"/><path d="M1 0l6 4.500L1 9z" fill="#8f92a8"/></svg>
<div class="abs" style="left:69px;top:836px;width:54px;height:15px;background:linear-gradient(#f4f5fa,#e1e3ee);border:1px solid #8a8da4;border-top:none;font-family:'Liberation Sans',sans-serif;font-weight:bold;font-size:12px;line-height:14px;text-align:center;color:#111">Model</div>
<div class="abs" style="left:123px;top:836px;width:103px;height:15px;background:#b7bbd0;border:1px solid #62667f;border-width:1px 1px 2px 1px;font-family:'Liberation Sans',sans-serif;font-size:12px;line-height:12px;text-align:center;color:#222">Motion Study 1</div>
<div class="abs" style="left:0;top:852px;width:1600px;height:18px;background:linear-gradient(#e6e8f1,#d3d6e4 60%,#c6c9db)"></div>
<div class="abs tt" style="left:2px;top:854px;color:#111">SolidWorks Premium 2012 x64 Edition</div>
<div class="abs" style="left:1331px;top:854px;width:1px;height:14px;background:#b4b7c9;box-shadow:1px 0 0 #f2f3f8"></div>
<div class="abs" style="left:1337px;top:854px;width:1px;height:14px;background:#b4b7c9;box-shadow:1px 0 0 #f2f3f8"></div>
<div class="abs" style="left:1411px;top:854px;width:1px;height:14px;background:#b4b7c9;box-shadow:1px 0 0 #f2f3f8"></div>
<div class="abs" style="left:1419px;top:854px;width:1px;height:14px;background:#b4b7c9;box-shadow:1px 0 0 #f2f3f8"></div>
<div class="abs" style="left:1424px;top:854px;width:1px;height:14px;background:#b4b7c9;box-shadow:1px 0 0 #f2f3f8"></div>
<div class="abs tt" style="left:1344px;top:854px">Editing Part</div>
<div class="abs tt" style="left:1445px;top:854px">Custom</div>
<svg class="abs" style="left:1493px;top:859px" width="5" height="3" viewBox="0 0 5 3" ><path d="M0 3L2.500 0 5 3z" fill="#222"/></svg>
<div class="abs" style="left:1515px;top:854px;width:13px;height:13px;border:1px solid #555;background:#f4fff4;font-family:'Liberation Sans',sans-serif;font-weight:bold;font-size:11px;line-height:11px;text-align:center;color:#0a8a0a">?</div>
<svg class="abs" style="left:1578px;top:853px" width="15" height="16" viewBox="0 0 15 16" ><path d="M2 10L10 1l4 3-7 10-4 0z" fill="#f2cc1c" stroke="#6a5000" stroke-width="1.200"/><circle cx="10.500" cy="4.500" r="1.200" fill="#fff" stroke="#6a5000" stroke-width=".6"/></svg>
<div class="abs" style="left:0;top:870px;width:1600px;height:30px;background:linear-gradient(#3a3a3c 0,#1d1d1f 3px,#141416 55%,#0c0c0e 100%)"></div>
<div class="abs" style="left:8px;top:863px;width:38px;height:38px;border-radius:19px;background:radial-gradient(circle at 50% 35%,#8fd0f8 0,#3a86d0 45%,#123c78 80%,#0a1e3c 100%);box-shadow:0 0 2px 1px rgba(160,200,240,.55)"></div>
<svg class="abs" style="left:17px;top:872px" width="20" height="20" viewBox="0 0 20 20" ><path d="M1 3c3-1.500 5-1.500 8 0v6.500c-3-1.500-5-1.500-8 0z" fill="#e8562a"/><path d="M10.500 3.500c3 1.500 5 1.500 8 0V10c-3 1.500-5 1.500-8 0z" fill="#8ac83a"/><path d="M1 11c3-1.500 5-1.500 8 0v6.500c-3-1.500-5-1.500-8 0z" fill="#3a9ae8"/><path d="M10.500 11.500c3 1.500 5 1.500 8 0V18c-3 1.500-5 1.500-8 0z" fill="#f8c828"/></svg>
<svg class="abs" style="left:60px;top:876px" width="17" height="17" viewBox="0 0 17 17" ><circle cx="8.500" cy="8.500" r="7.500" fill="#2a58b8" stroke="#9ab" stroke-width="1"/><path d="M3 5c3 1 5-1 7 1s-1 4 1 6-4 3-6 1-1-5-2-8z" fill="#4a8a4a" opacity=".8"/><path d="M2 11l6-8 7 6-5 6z" fill="none" stroke="#f0d060" stroke-width=".9"/><circle cx="8" cy="3" r="1.200" fill="#fff"/><circle cx="15" cy="9" r="1.200" fill="#fff"/><circle cx="2.500" cy="11" r="1.200" fill="#fff"/><circle cx="10" cy="15" r="1.200" fill="#fff"/></svg>
<svg class="abs" style="left:82px;top:876px" width="17" height="17" viewBox="0 0 17 17" ><circle cx="6" cy="4" r="2.600" fill="#6ab04a"/><path d="M1.500 12c0-7 9-7 9 0z" fill="#6ab04a"/><circle cx="11.500" cy="4.500" r="2.600" fill="#4a8ad8"/><path d="M7 12.500c0-7 9-7 9 0z" fill="#4a8ad8"/><path d="M0 12c4-2 12-2 17 0v2c-5 2-13 2-17 0z" fill="#f0b020"/><path d="M2 13.500c4 1 9 1 13 0" stroke="#fff3b0" fill="none"/></svg>
<svg class="abs" style="left:106px;top:876px" width="17" height="17" viewBox="0 0 17 17" ><circle cx="7" cy="7.500" r="6" fill="#2a6a3a"/><path d="M3 5c2-2 5-1 6 1s-2 3-1 5-4 0-5-2z" fill="#5aaa4a"/><path d="M8 3l5 12M15 6l-4 9M9 11h6" stroke="#f0c020" stroke-width="1.800" fill="none"/></svg>
<svg class="abs" style="left:128px;top:876px" width="17" height="17" viewBox="0 0 17 17" ><rect x=".5" y=".5" width="16" height="16" rx="2" fill="#1f74e0" stroke="#9cc4f4"/><path d="M3 14L8.500 3 14 14h-2.500L8.500 8l-3 6z" fill="#fff"/></svg>
<svg class="abs" style="left:151px;top:876px" width="17" height="17" viewBox="0 0 17 17" ><path d="M1 6h15v10H1z" fill="#d8dadc" stroke="#999"/><path d="M4 1h9v8H4z" fill="#f4f4f4"/><path d="M5 9l3.500-8L12 9h-2l-1.500-4L7 9z" fill="#d8202a"/><path d="M1 11h15v5H1z" fill="#b8babc"/></svg>
<svg class="abs" style="left:173px;top:876px" width="18" height="18" viewBox="0 0 21 21" ><path d="M1 5l9-4 10 4v11l-10 4-9-4z" fill="#d4202a" stroke="#8e1218" stroke-width="1"/><path d="M1 5l9 3 10-3-10-4z" fill="#ee5a5f"/><path d="M10 8v12l10-4V5z" fill="#b5141d"/><text x="1.800" y="15.200" font-family="Liberation Sans,sans-serif" font-weight="bold" font-size="11" fill="#fff" textLength="7.500" lengthAdjust="spacingAndGlyphs">S</text><text x="10" y="15.200" font-family="Liberation Sans,sans-serif" font-weight="bold" font-size="11" fill="#fff" textLength="9.500" lengthAdjust="spacingAndGlyphs">W</text></svg>
<svg class="abs" style="left:197px;top:876px" width="17" height="17" viewBox="0 0 17 17" ><path d="M2 9L11 1l4 3-9 8z" fill="#f0a020" stroke="#7a4a00" stroke-width=".8"/><path d="M2 13l9-8 4 3-9 8z" fill="#f8c040" stroke="#7a4a00" stroke-width=".8"/><path d="M9 3l-3 6h4l-3 6" fill="none" stroke="#fff" stroke-width="1.400"/></svg>
<div class="abs" style="left:285px;top:871px;width:50px;height:32px;border:1px solid #7c7c80;border-radius:3px;background:linear-gradient(135deg,#6a6a6c 0,#47474a 45%,#262628 50%,#2e2e30 100%)"></div>
<div class="abs" style="left:339px;top:871px;width:50px;height:32px;border:1px solid #7c7c80;border-radius:3px;background:linear-gradient(135deg,#6a6a6c 0,#47474a 45%,#262628 50%,#2e2e30 100%)"></div>
<div class="abs" style="left:393px;top:871px;width:50px;height:32px;border:1px solid #7c7c80;border-radius:3px;background:linear-gradient(135deg,#6a6a6c 0,#47474a 45%,#262628 50%,#2e2e30 100%)"></div>
<div class="abs" style="left:447px;top:871px;width:50px;height:32px;border:1px solid #c8c8ca;border-radius:3px;background:linear-gradient(135deg,#b4b4b6 0,#8a8a8c 45%,#6a6a6c 50%,#7c7c7e 100%)"></div>
<div class="abs" style="left:501px;top:871px;width:50px;height:32px;border:1px solid #7c7c80;border-radius:3px;background:linear-gradient(135deg,#6a6a6c 0,#47474a 45%,#262628 50%,#2e2e30 100%)"></div>
<div class="abs" style="left:555px;top:871px;width:50px;height:32px;border:1px solid #7c7c80;border-radius:3px;background:linear-gradient(135deg,#6a6a6c 0,#47474a 45%,#262628 50%,#2e2e30 100%)"></div>
<svg class="abs" style="left:302px;top:877px" width="17" height="17" viewBox="0 0 17 17" ><path d="M2 9L11 1l4 3-9 8z" fill="#f0a020" stroke="#7a4a00" stroke-width=".8"/><path d="M2 13l9-8 4 3-9 8z" fill="#f8c040" stroke="#7a4a00" stroke-width=".8"/><path d="M9 3l-3 6h4l-3 6" fill="none" stroke="#fff" stroke-width="1.400"/></svg>
<svg class="abs" style="left:356px;top:877px" width="17" height="17" viewBox="0 0 17 17" ><circle cx="6" cy="4" r="2.600" fill="#6ab04a"/><path d="M1.500 12c0-7 9-7 9 0z" fill="#6ab04a"/><circle cx="11.500" cy="4.500" r="2.600" fill="#4a8ad8"/><path d="M7 12.500c0-7 9-7 9 0z" fill="#4a8ad8"/><path d="M0 12c4-2 12-2 17 0v2c-5 2-13 2-17 0z" fill="#f0b020"/><path d="M2 13.500c4 1 9 1 13 0" stroke="#fff3b0" fill="none"/></svg>
<svg class="abs" style="left:410px;top:877px" width="17" height="17" viewBox="0 0 17 17" ><circle cx="8.500" cy="8.500" r="7.500" fill="#2a58b8" stroke="#9ab" stroke-width="1"/><path d="M3 5c3 1 5-1 7 1s-1 4 1 6-4 3-6 1-1-5-2-8z" fill="#4a8a4a" opacity=".8"/><path d="M2 11l6-8 7 6-5 6z" fill="none" stroke="#f0d060" stroke-width=".9"/><circle cx="8" cy="3" r="1.200" fill="#fff"/><circle cx="15" cy="9" r="1.200" fill="#fff"/><circle cx="2.500" cy="11" r="1.200" fill="#fff"/><circle cx="10" cy="15" r="1.200" fill="#fff"/></svg>
<svg class="abs" style="left:463px;top:876px" width="19" height="19" viewBox="0 0 21 21" ><path d="M1 5l9-4 10 4v11l-10 4-9-4z" fill="#d4202a" stroke="#8e1218" stroke-width="1"/><path d="M1 5l9 3 10-3-10-4z" fill="#ee5a5f"/><path d="M10 8v12l10-4V5z" fill="#b5141d"/><text x="1.800" y="15.200" font-family="Liberation Sans,sans-serif" font-weight="bold" font-size="11" fill="#fff" textLength="7.500" lengthAdjust="spacingAndGlyphs">S</text><text x="10" y="15.200" font-family="Liberation Sans,sans-serif" font-weight="bold" font-size="11" fill="#fff" textLength="9.500" lengthAdjust="spacingAndGlyphs">W</text></svg>
<svg class="abs" style="left:517px;top:879px" width="18" height="13" viewBox="0 0 18 13" ><path d="M.5.5h17v12H.5z" fill="#d8d8da" stroke="#f4f4f4"/><path d="M3 3h11v6H3z" fill="#8a8a8c"/><path d="M5 5h6v2H5z" fill="#c4c4c6"/></svg>
<svg class="abs" style="left:571px;top:878px" width="18" height="15" viewBox="0 0 18 15" ><path d="M.5.5h17v14H.5z" fill="#f4f6f8" stroke="#9ab"/><path d="M2 2h14v10H2z" fill="#2a8ad8"/><path d="M2 9c4-3 8 1 14-2v5H2z" fill="#3aa05a"/></svg>
<svg class="abs" style="left:1300px;top:877px" width="16" height="17" viewBox="0 0 16 17" ><circle cx="7" cy="4" r="3" fill="#7ab8e8"/><path d="M2 14c0-8 10-8 10 0z" fill="#4a90d8"/><rect x="8" y="9" width="7" height="7" rx="1" fill="#3ac83a" stroke="#e8ffe8" stroke-width=".8"/></svg>
<svg class="abs" style="left:1323px;top:877px" width="16" height="16" viewBox="0 0 16 16" ><rect x=".5" y=".5" width="15" height="15" fill="#1a1a1a" stroke="#c8c060"/><path d="M2 3h12M2 5h12M2 7h12" stroke="#4ac84a" stroke-width="1"/><path d="M2 9h12M2 11h12M2 13h12" stroke="#c84a8a" stroke-width="1"/></svg>
<svg class="abs" style="left:1347px;top:877px" width="16" height="16" viewBox="0 0 16 16" ><rect x=".5" y=".5" width="15" height="15" rx="1.500" fill="#d8202a" stroke="#f08088"/><path d="M3 12c1-6 4-8 6-7s0 5 4 6" fill="none" stroke="#fff" stroke-width="1.800"/></svg>
<svg class="abs" style="left:1371px;top:877px" width="16" height="16" viewBox="0 0 16 16" ><rect x=".5" y=".5" width="15" height="15" rx="1.500" fill="#f0f0f0" stroke="#aaa"/><circle cx="8" cy="8" r="4.500" fill="none" stroke="#222" stroke-width="1.800"/><circle cx="8" cy="8" r="1.500" fill="#222"/></svg>
<svg class="abs" style="left:1395px;top:877px" width="16" height="16" viewBox="0 0 16 16" ><rect x=".5" y=".5" width="15" height="15" rx="1.500" fill="#f4f0f8" stroke="#a050c0"/><path d="M4 12V4h2l4 5V4h2v8h-2L6 7v5z" fill="#80209a"/></svg>
<svg class="abs" style="left:1419px;top:877px" width="16" height="17" viewBox="0 0 16 17" ><rect x="1" y="3" width="9" height="12" rx="1" fill="#f4f4f4" stroke="#888"/><path d="M10 6h3v2h2v3h-2v2h-3z" fill="#f0f0f0" stroke="#999" stroke-width=".6"/><path d="M3 0v3M7 0v3" stroke="#ddd" stroke-width="1.500"/></svg>
<svg class="abs" style="left:1442px;top:877px" width="17" height="17" viewBox="0 0 17 17" ><path d="M4 1h6v5h4v6H2V5h2z" fill="#f2cc1c" stroke="#7a5c00" stroke-width="1"/><circle cx="4" cy="13" r="2.700" fill="#f2cc1c" stroke="#5a4000" stroke-width="1.200"/><circle cx="11" cy="13" r="2.700" fill="#f2cc1c" stroke="#5a4000" stroke-width="1.200"/><path d="M12 16l3-6 2 6z" fill="#f8e040" stroke="#5a4000" stroke-width=".6"/></svg>
<svg class="abs" style="left:1467px;top:878px" width="16" height="14" viewBox="0 0 16 14" ><path d="M1 13v-2M4 13V9M7 13V7M10 13V4M13 13V1" stroke="#f0f0f0" stroke-width="2"/></svg>
<svg class="abs" style="left:1491px;top:878px" width="17" height="15" viewBox="0 0 17 15" ><path d="M1 5h3l4-4v13l-4-4H1z" fill="#f0f0f0"/><path d="M10 4c2 2 2 5 0 7M12.500 2c3 3 3 8 0 11" fill="none" stroke="#e0e0e0" stroke-width="1.200"/></svg>
<div class="abs" style="left:1529px;top:878px;font-family:'Liberation Sans',sans-serif;font-size:12px;line-height:14px;color:#fff;white-space:nowrap">9:06 PM</div>
<div class="abs" style="left:1587px;top:871px;width:14px;height:30px;border:1px solid #6a6a6c;background:linear-gradient(90deg,#4a4a4c,#2a2a2c)"></div>
</div>
</body></html>
